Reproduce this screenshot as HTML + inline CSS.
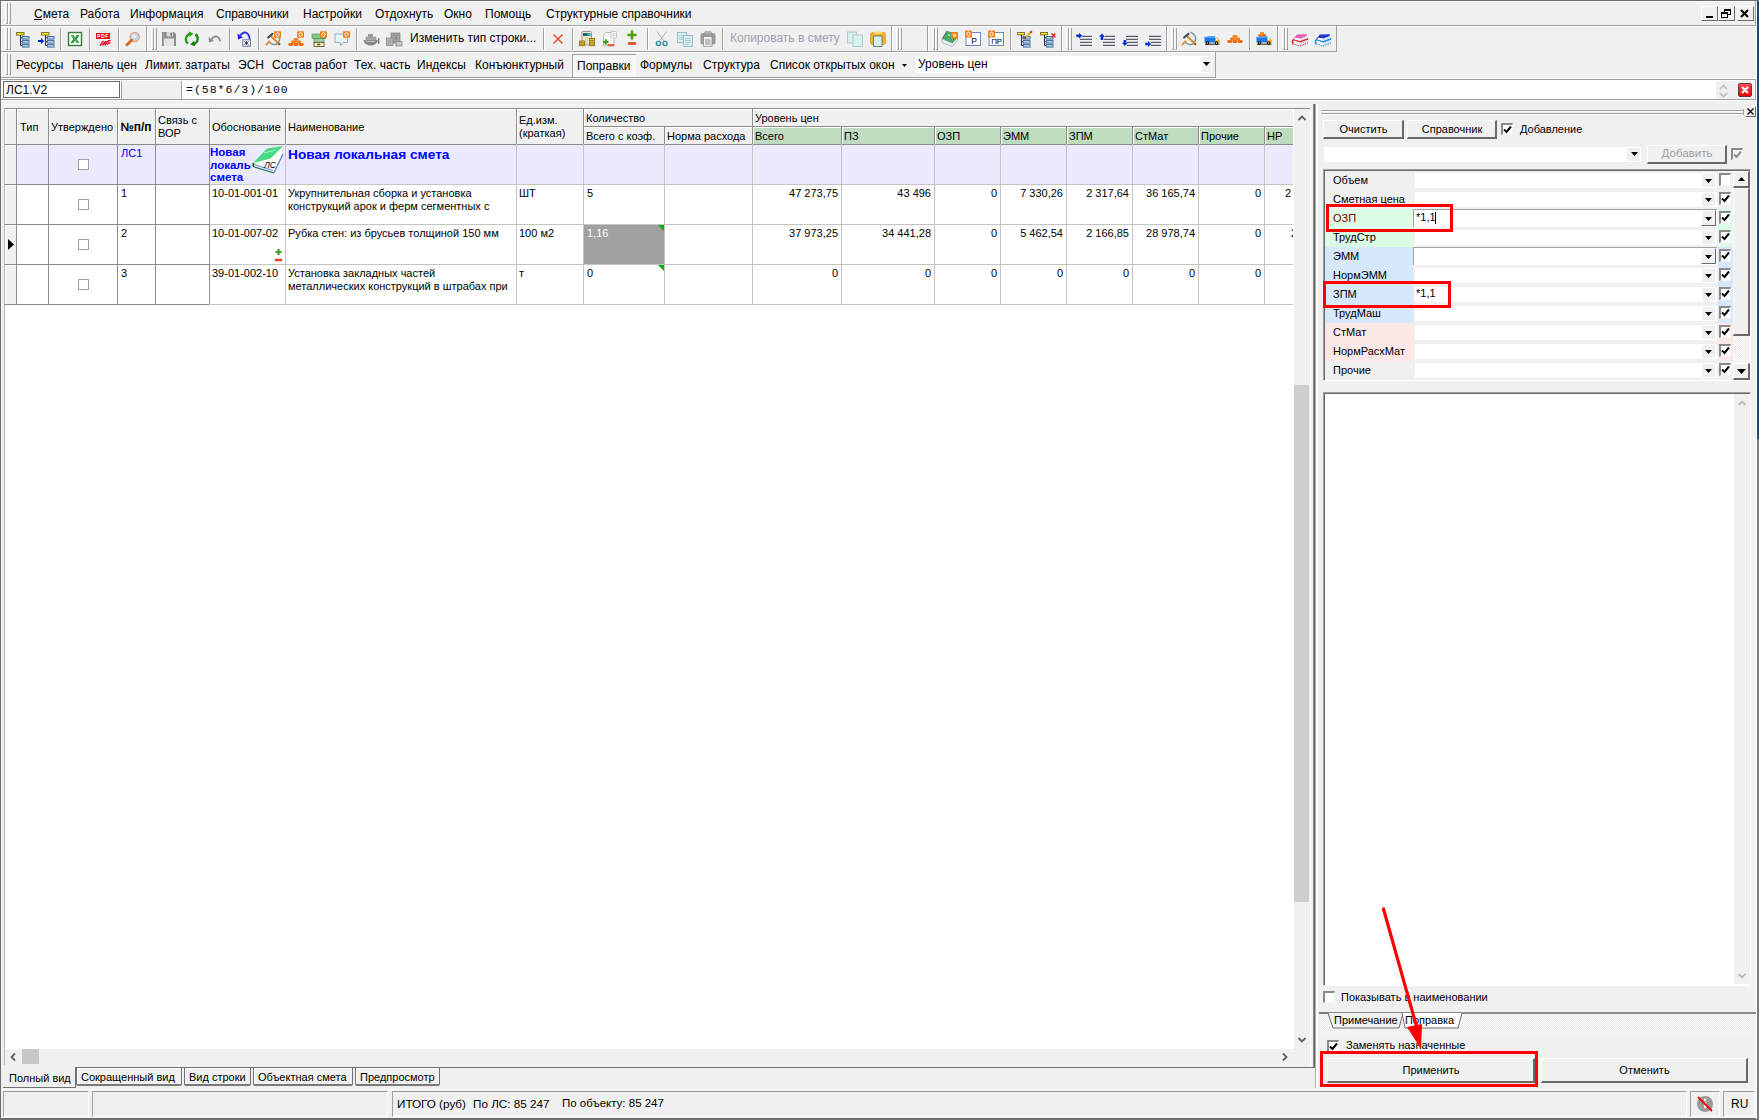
<!DOCTYPE html><html><head><meta charset="utf-8"><style>
html,body{margin:0;padding:0;width:1759px;height:1120px;overflow:hidden;background:#f0f0f0;position:relative;font-family:"Liberation Sans",sans-serif}
.a{position:absolute}
.tx{white-space:nowrap;font-family:"Liberation Sans",sans-serif}
svg{overflow:visible}
</style></head><body>
<div class="a" style="left:0px;top:0px;width:1759px;height:1px;background:#6d6d6d"></div>
<div class="a" style="left:0px;top:0px;width:1px;height:1120px;background:#6d6d6d"></div>
<div class="a" style="left:1757px;top:0px;width:2px;height:1120px;background:#7a7a7a"></div>
<div class="a" style="left:1757px;top:1px;width:2px;height:438px;background:#22476f"></div>
<div class="a" style="left:0px;top:1118px;width:1759px;height:2px;background:#707070"></div>
<div class="a" style="left:1px;top:1px;width:1755px;height:1px;background:#fff"></div>
<div class="a" style="left:1px;top:1px;width:1px;height:24px;background:#fff"></div>
<div class="a" style="left:1755px;top:1px;width:1px;height:25px;background:#a0a0a0"></div>
<div class="a" style="left:1756px;top:1px;width:1px;height:1118px;background:#fff"></div>
<div class="a" style="left:1px;top:25px;width:1755px;height:1px;background:#a0a0a0"></div>
<div class="a" style="left:1px;top:26px;width:1755px;height:1px;background:#fff"></div>
<div class="a" style="left:5px;top:3px;width:1px;height:21px;background:#fff"></div>
<div class="a" style="left:7px;top:3px;width:1px;height:21px;background:#a0a0a0"></div>
<div class="a" style="left:8px;top:3px;width:1px;height:21px;background:#fff"></div>
<div class="a" style="left:10px;top:3px;width:1px;height:21px;background:#a0a0a0"></div>
<div class="a" style="left:6px;top:23px;width:1px;height:1px;background:#a0a0a0"></div>
<div class="a" style="left:9px;top:23px;width:1px;height:1px;background:#a0a0a0"></div>
<div class="a tx" style="left:34px;top:7.84px;font-size:12px;line-height:12px;color:#000;">Смета</div>
<div class="a tx" style="left:80px;top:7.84px;font-size:12px;line-height:12px;color:#000;">Работа</div>
<div class="a tx" style="left:130px;top:7.84px;font-size:12px;line-height:12px;color:#000;">Информация</div>
<div class="a tx" style="left:216px;top:7.84px;font-size:12px;line-height:12px;color:#000;">Справочники</div>
<div class="a tx" style="left:303px;top:7.84px;font-size:12px;line-height:12px;color:#000;">Настройки</div>
<div class="a tx" style="left:375px;top:7.84px;font-size:12px;line-height:12px;color:#000;">Отдохнуть</div>
<div class="a tx" style="left:444px;top:7.84px;font-size:12px;line-height:12px;color:#000;">Окно</div>
<div class="a tx" style="left:485px;top:7.84px;font-size:12px;line-height:12px;color:#000;">Помощь</div>
<div class="a tx" style="left:546px;top:7.84px;font-size:12px;line-height:12px;color:#000;">Структурные справочники</div>
<div class="a" style="left:34px;top:19px;width:8px;height:1px;background:#000"></div>
<div class="a" style="left:1701px;top:6px;width:17px;height:15px;background:#f0f0f0;border-top:1px solid #fff;border-left:1px solid #fff;border-right:1px solid #696969;border-bottom:1px solid #696969;box-sizing:border-box"></div>
<div class="a" style="left:1718px;top:6px;width:17px;height:15px;background:#f0f0f0;border-top:1px solid #fff;border-left:1px solid #fff;border-right:1px solid #696969;border-bottom:1px solid #696969;box-sizing:border-box"></div>
<div class="a" style="left:1737px;top:6px;width:17px;height:15px;background:#f0f0f0;border-top:1px solid #fff;border-left:1px solid #fff;border-right:1px solid #696969;border-bottom:1px solid #696969;box-sizing:border-box"></div>
<div class="a" style="left:1706px;top:16px;width:7px;height:2px;background:#000"></div>
<svg class="a" style="left:1721px;top:9px" width="10" height="9" viewBox="0 0 10 9"><rect x="3.5" y="0.5" width="6" height="5" fill="none" stroke="#000"/><rect x="3" y="0" width="7" height="2" fill="#000"/><rect x="0.5" y="3.5" width="6" height="5" fill="#f0f0f0" stroke="#000"/><rect x="0" y="3" width="7" height="2" fill="#000"/></svg>
<svg class="a" style="left:1740px;top:9px" width="10" height="9" viewBox="0 0 10 9"><path d="M1 1 L8 8 M8 1 L1 8" stroke="#000" stroke-width="2"/></svg>
<div class="a" style="left:1px;top:26px;width:145px;height:1px;background:#fff"></div>
<div class="a" style="left:1px;top:26px;width:1px;height:25px;background:#fff"></div>
<div class="a" style="left:146px;top:26px;width:1px;height:26px;background:#a0a0a0"></div>
<div class="a" style="left:1px;top:51px;width:146px;height:1px;background:#a0a0a0"></div>
<div class="a" style="left:147px;top:26px;width:744px;height:1px;background:#fff"></div>
<div class="a" style="left:147px;top:26px;width:1px;height:25px;background:#fff"></div>
<div class="a" style="left:891px;top:26px;width:1px;height:26px;background:#a0a0a0"></div>
<div class="a" style="left:147px;top:51px;width:745px;height:1px;background:#a0a0a0"></div>
<div class="a" style="left:892px;top:26px;width:35px;height:1px;background:#fff"></div>
<div class="a" style="left:892px;top:26px;width:1px;height:25px;background:#fff"></div>
<div class="a" style="left:927px;top:26px;width:1px;height:26px;background:#a0a0a0"></div>
<div class="a" style="left:892px;top:51px;width:36px;height:1px;background:#a0a0a0"></div>
<div class="a" style="left:928px;top:26px;width:133px;height:1px;background:#fff"></div>
<div class="a" style="left:928px;top:26px;width:1px;height:25px;background:#fff"></div>
<div class="a" style="left:1061px;top:26px;width:1px;height:26px;background:#a0a0a0"></div>
<div class="a" style="left:928px;top:51px;width:134px;height:1px;background:#a0a0a0"></div>
<div class="a" style="left:1062px;top:26px;width:104px;height:1px;background:#fff"></div>
<div class="a" style="left:1062px;top:26px;width:1px;height:25px;background:#fff"></div>
<div class="a" style="left:1166px;top:26px;width:1px;height:26px;background:#a0a0a0"></div>
<div class="a" style="left:1062px;top:51px;width:105px;height:1px;background:#a0a0a0"></div>
<div class="a" style="left:1167px;top:26px;width:110px;height:1px;background:#fff"></div>
<div class="a" style="left:1167px;top:26px;width:1px;height:25px;background:#fff"></div>
<div class="a" style="left:1277px;top:26px;width:1px;height:26px;background:#a0a0a0"></div>
<div class="a" style="left:1167px;top:51px;width:111px;height:1px;background:#a0a0a0"></div>
<div class="a" style="left:1278px;top:26px;width:58px;height:1px;background:#fff"></div>
<div class="a" style="left:1278px;top:26px;width:1px;height:25px;background:#fff"></div>
<div class="a" style="left:1336px;top:26px;width:1px;height:26px;background:#a0a0a0"></div>
<div class="a" style="left:1278px;top:51px;width:59px;height:1px;background:#a0a0a0"></div>
<div class="a" style="left:5px;top:28px;width:1px;height:22px;background:#fff"></div>
<div class="a" style="left:7px;top:28px;width:1px;height:22px;background:#a0a0a0"></div>
<div class="a" style="left:8px;top:28px;width:1px;height:22px;background:#fff"></div>
<div class="a" style="left:10px;top:28px;width:1px;height:22px;background:#a0a0a0"></div>
<div class="a" style="left:6px;top:49px;width:1px;height:1px;background:#a0a0a0"></div>
<div class="a" style="left:9px;top:49px;width:1px;height:1px;background:#a0a0a0"></div>
<div class="a" style="left:151px;top:28px;width:1px;height:22px;background:#fff"></div>
<div class="a" style="left:153px;top:28px;width:1px;height:22px;background:#a0a0a0"></div>
<div class="a" style="left:154px;top:28px;width:1px;height:22px;background:#fff"></div>
<div class="a" style="left:156px;top:28px;width:1px;height:22px;background:#a0a0a0"></div>
<div class="a" style="left:152px;top:49px;width:1px;height:1px;background:#a0a0a0"></div>
<div class="a" style="left:155px;top:49px;width:1px;height:1px;background:#a0a0a0"></div>
<div class="a" style="left:896px;top:28px;width:1px;height:22px;background:#fff"></div>
<div class="a" style="left:898px;top:28px;width:1px;height:22px;background:#a0a0a0"></div>
<div class="a" style="left:899px;top:28px;width:1px;height:22px;background:#fff"></div>
<div class="a" style="left:901px;top:28px;width:1px;height:22px;background:#a0a0a0"></div>
<div class="a" style="left:897px;top:49px;width:1px;height:1px;background:#a0a0a0"></div>
<div class="a" style="left:900px;top:49px;width:1px;height:1px;background:#a0a0a0"></div>
<div class="a" style="left:932px;top:28px;width:1px;height:22px;background:#fff"></div>
<div class="a" style="left:934px;top:28px;width:1px;height:22px;background:#a0a0a0"></div>
<div class="a" style="left:935px;top:28px;width:1px;height:22px;background:#fff"></div>
<div class="a" style="left:937px;top:28px;width:1px;height:22px;background:#a0a0a0"></div>
<div class="a" style="left:933px;top:49px;width:1px;height:1px;background:#a0a0a0"></div>
<div class="a" style="left:936px;top:49px;width:1px;height:1px;background:#a0a0a0"></div>
<div class="a" style="left:1066px;top:28px;width:1px;height:22px;background:#fff"></div>
<div class="a" style="left:1068px;top:28px;width:1px;height:22px;background:#a0a0a0"></div>
<div class="a" style="left:1069px;top:28px;width:1px;height:22px;background:#fff"></div>
<div class="a" style="left:1071px;top:28px;width:1px;height:22px;background:#a0a0a0"></div>
<div class="a" style="left:1067px;top:49px;width:1px;height:1px;background:#a0a0a0"></div>
<div class="a" style="left:1070px;top:49px;width:1px;height:1px;background:#a0a0a0"></div>
<div class="a" style="left:1171px;top:28px;width:1px;height:22px;background:#fff"></div>
<div class="a" style="left:1173px;top:28px;width:1px;height:22px;background:#a0a0a0"></div>
<div class="a" style="left:1174px;top:28px;width:1px;height:22px;background:#fff"></div>
<div class="a" style="left:1176px;top:28px;width:1px;height:22px;background:#a0a0a0"></div>
<div class="a" style="left:1172px;top:49px;width:1px;height:1px;background:#a0a0a0"></div>
<div class="a" style="left:1175px;top:49px;width:1px;height:1px;background:#a0a0a0"></div>
<div class="a" style="left:1282px;top:28px;width:1px;height:22px;background:#fff"></div>
<div class="a" style="left:1284px;top:28px;width:1px;height:22px;background:#a0a0a0"></div>
<div class="a" style="left:1285px;top:28px;width:1px;height:22px;background:#fff"></div>
<div class="a" style="left:1287px;top:28px;width:1px;height:22px;background:#a0a0a0"></div>
<div class="a" style="left:1283px;top:49px;width:1px;height:1px;background:#a0a0a0"></div>
<div class="a" style="left:1286px;top:49px;width:1px;height:1px;background:#a0a0a0"></div>
<div class="a" style="left:60px;top:28px;width:1px;height:22px;background:#a0a0a0"></div>
<div class="a" style="left:61px;top:28px;width:1px;height:22px;background:#fff"></div>
<div class="a" style="left:89px;top:28px;width:1px;height:22px;background:#a0a0a0"></div>
<div class="a" style="left:90px;top:28px;width:1px;height:22px;background:#fff"></div>
<div class="a" style="left:118px;top:28px;width:1px;height:22px;background:#a0a0a0"></div>
<div class="a" style="left:119px;top:28px;width:1px;height:22px;background:#fff"></div>
<div class="a" style="left:229px;top:28px;width:1px;height:22px;background:#a0a0a0"></div>
<div class="a" style="left:230px;top:28px;width:1px;height:22px;background:#fff"></div>
<div class="a" style="left:258px;top:28px;width:1px;height:22px;background:#a0a0a0"></div>
<div class="a" style="left:259px;top:28px;width:1px;height:22px;background:#fff"></div>
<div class="a" style="left:356px;top:28px;width:1px;height:22px;background:#a0a0a0"></div>
<div class="a" style="left:357px;top:28px;width:1px;height:22px;background:#fff"></div>
<div class="a" style="left:543px;top:28px;width:1px;height:22px;background:#a0a0a0"></div>
<div class="a" style="left:544px;top:28px;width:1px;height:22px;background:#fff"></div>
<div class="a" style="left:572px;top:28px;width:1px;height:22px;background:#a0a0a0"></div>
<div class="a" style="left:573px;top:28px;width:1px;height:22px;background:#fff"></div>
<div class="a" style="left:647px;top:28px;width:1px;height:22px;background:#a0a0a0"></div>
<div class="a" style="left:648px;top:28px;width:1px;height:22px;background:#fff"></div>
<div class="a" style="left:722px;top:28px;width:1px;height:22px;background:#a0a0a0"></div>
<div class="a" style="left:723px;top:28px;width:1px;height:22px;background:#fff"></div>
<div class="a" style="left:1010px;top:28px;width:1px;height:22px;background:#a0a0a0"></div>
<div class="a" style="left:1011px;top:28px;width:1px;height:22px;background:#fff"></div>
<div class="a" style="left:1249px;top:28px;width:1px;height:22px;background:#a0a0a0"></div>
<div class="a" style="left:1250px;top:28px;width:1px;height:22px;background:#fff"></div>
<svg class="a" style="left:14px;top:31px" width="16" height="16" viewBox="0 0 16 16"><rect x="2.5" y="1.5" width="7.5" height="2.6" fill="#f8f000" stroke="#807840" stroke-width="1"/><path d="M6.5 4 V14.5 M6.5 6.8 H8.5 M6.5 10.8 H8.5 M6.5 14.5 H8.5" stroke="#24345e" stroke-width="1.1" fill="none"/><rect x="8.5" y="5.5" width="6.5" height="2.6" fill="#a8d0f8" stroke="#56709a" stroke-width="1"/><rect x="8.5" y="9.5" width="6.5" height="2.6" fill="#a8d0f8" stroke="#56709a" stroke-width="1"/><rect x="8.5" y="13.5" width="6.5" height="2.6" fill="#a8d0f8" stroke="#56709a" stroke-width="1"/></svg>
<svg class="a" style="left:38px;top:31px" width="16" height="16" viewBox="0 0 16 16"><rect x="3.5" y="1.5" width="7.5" height="2.6" fill="#f8f000" stroke="#807840" stroke-width="1"/><path d="M7.5 4 V14.5 M7.5 6.8 H9.5 M7.5 10.8 H9.5 M7.5 14.5 H9.5" stroke="#24345e" stroke-width="1.1" fill="none"/><rect x="9.5" y="5.5" width="6.5" height="2.6" fill="#a8d0f8" stroke="#56709a" stroke-width="1"/><rect x="9.5" y="9.5" width="6.5" height="2.6" fill="#a8d0f8" stroke="#56709a" stroke-width="1"/><rect x="9.5" y="13.5" width="6.5" height="2.6" fill="#a8d0f8" stroke="#56709a" stroke-width="1"/><path d="M0 9 H3 V7 L6.2 10 L3 13 V11 H0 Z" fill="#0028e0"/></svg>
<svg class="a" style="left:67px;top:31px" width="16" height="16" viewBox="0 0 16 16"><rect x="1.5" y="1.5" width="13" height="13" fill="#fafffa" stroke="#3c7a3c" stroke-width="1.4"/><path d="M3.5 4 H6.5 L8 6.5 L9.5 4 H12.5 L9.8 8 L12.5 12 H9.5 L8 9.5 L6.5 12 H3.5 L6.2 8 Z" fill="#2e9a3a"/><path d="M4.5 4.5 L11 11.5" stroke="#9ad8a0" stroke-width="0.6"/></svg>
<svg class="a" style="left:96px;top:31px" width="16" height="16" viewBox="0 0 16 16"><path d="M3.5 1 H13 L15.5 3.5 V15.5 H3.5 Z" fill="#fff" stroke="#c8d8d8" stroke-width="0.6"/><rect x="0" y="2" width="14" height="6" fill="#e8001a"/><text x="7" y="7.2" font-size="5.2" font-family="Liberation Sans" font-weight="bold" fill="#fff" text-anchor="middle" letter-spacing="0.6">PDF</text><path d="M4 14.5 L7.5 10 M6.5 14.5 L10 10 M9 14.5 C10 11 12 9.5 14.5 9.5 M11.5 14 C11.5 12 13 11.5 14.5 12" stroke="#e8001a" stroke-width="1.4" fill="none"/></svg>
<svg class="a" style="left:125px;top:31px" width="16" height="16" viewBox="0 0 16 16"><circle cx="9.7" cy="6" r="4.6" fill="#c0d4f8" stroke="#e8a070" stroke-width="1.3"/><circle cx="9" cy="5.2" r="2" fill="#e8f0ff"/><path d="M6.5 9.3 L2 13.8" stroke="#d86818" stroke-width="3" stroke-linecap="round"/></svg>
<svg class="a" style="left:161px;top:31px" width="16" height="16" viewBox="0 0 16 16"><path d="M1 1 H13 L15 3 V15 H1 Z" fill="#8c8c8c"/><rect x="3" y="7.5" width="10" height="7.5" fill="#e4e4e4"/><rect x="5.5" y="1" width="6.5" height="4.5" fill="#d8d8d8"/><rect x="9.5" y="1.8" width="1.6" height="3" fill="#707070"/><path d="M2.5 2 V14" stroke="#a8a8a8" stroke-width="0.8"/></svg>
<svg class="a" style="left:184px;top:31px" width="16" height="16" viewBox="0 0 16 16"><path d="M4 12.5 A5.6 5.6 0 0 1 5.8 2.8" stroke="#28a020" stroke-width="2.4" fill="none"/><path d="M4.8 0.5 L9.5 2.5 L5.5 6 Z" fill="#28a020"/><path d="M11.5 3.2 A5.6 5.6 0 0 1 9.8 13" stroke="#1a8a18" stroke-width="2.4" fill="none"/><path d="M11 15.3 L6.2 13.5 L10.2 9.8 Z" fill="#0a7a0a"/></svg>
<svg class="a" style="left:207px;top:31px" width="16" height="16" viewBox="0 0 16 16"><path d="M4.5 8.5 C7 4 11.5 4 13.5 10.5" stroke="#8c8c8c" stroke-width="1.6" fill="none"/><path d="M1.5 6 L2 11.5 L7 10 Z" fill="#8c8c8c"/></svg>
<svg class="a" style="left:236px;top:31px" width="16" height="16" viewBox="0 0 16 16"><path d="M4.5 4.5 C7 0 13 0 13.8 8.5" stroke="#3030e8" stroke-width="1.8" fill="none"/><path d="M1.5 2.5 L2 8.5 L7 6.5 Z" fill="#2020e8"/><rect x="6.8" y="8.8" width="7.6" height="6.4" fill="#fff" stroke="#6070a8" stroke-width="1"/><path d="M8.5 10.5 L12.5 13.5 M12.5 10.5 L8.5 13.5 M10.5 10.2 V13.8" stroke="#202020" stroke-width="0.9"/></svg>
<svg class="a" style="left:265px;top:31px" width="16" height="16" viewBox="0 0 16 16"><path d="M9.4 1.3 C14 2.5 15.5 7 14.2 10 C13 13 10.5 13.8 8.5 13.4 C6.8 13 5.5 12.3 4.4 11.2" stroke="#7a9aa0" stroke-width="1.5" fill="none"/><path d="M6.1 5.2 L14.6 13.4" stroke="#e08a28" stroke-width="2"/><path d="M13.5 12.4 L15 13.8" stroke="#905010" stroke-width="2"/><path d="M3.1 6.5 L7.4 2.9" stroke="#3a5058" stroke-width="2.2" stroke-linecap="round"/><path d="M1.3 13.6 L4.6 10.3" stroke="#e08a28" stroke-width="1.9" stroke-linecap="round"/><rect x="9" y="0.3" width="7" height="6.4" rx="0.8" fill="#f08018"/><circle cx="12.5" cy="3.5" r="1.7" fill="none" stroke="#fff" stroke-width="0.9"/><path d="M12.5 1 V1.6 M12.5 5.4 V6 M10 3.5 H10.6 M14.4 3.5 H15" stroke="#fff" stroke-width="0.8"/></svg>
<svg class="a" style="left:288px;top:31px" width="16" height="16" viewBox="0 0 16 16"><rect x="0.3" y="12" width="5" height="3" rx="1.4" fill="#f06a10"/><rect x="5.5" y="12" width="5" height="3" rx="1.4" fill="#f06a10"/><rect x="10.7" y="12" width="5" height="3" rx="1.4" fill="#f06a10"/><rect x="3" y="9.5" width="5" height="3" rx="1.4" fill="#f07a18"/><rect x="8.2" y="9.5" width="5" height="3" rx="1.4" fill="#f07a18"/><rect x="5.5" y="7" width="5" height="3" rx="1.4" fill="#f08a20"/><rect x="9" y="0.3" width="7" height="6.4" rx="0.8" fill="#f08018"/><circle cx="12.5" cy="3.5" r="1.7" fill="none" stroke="#fff" stroke-width="0.9"/><path d="M12.5 1 V1.6 M12.5 5.4 V6 M10 3.5 H10.6 M14.4 3.5 H15" stroke="#fff" stroke-width="0.8"/></svg>
<svg class="a" style="left:311px;top:31px" width="16" height="16" viewBox="0 0 16 16"><rect x="1" y="3" width="14" height="4.5" fill="#88c488" stroke="#4a8a4a" stroke-width="0.6"/><rect x="3" y="7.5" width="10" height="4" fill="#98cc98" stroke="#4a8a4a" stroke-width="0.6"/><rect x="3" y="11.5" width="10" height="4" fill="#fff4c8" stroke="#6a5030" stroke-width="0.9"/><rect x="6" y="12.8" width="3.5" height="1.4" rx="0.7" fill="#206a20"/><rect x="9" y="0.3" width="7" height="6.4" rx="0.8" fill="#f08018"/><circle cx="12.5" cy="3.5" r="1.7" fill="none" stroke="#fff" stroke-width="0.9"/><path d="M12.5 1 V1.6 M12.5 5.4 V6 M10 3.5 H10.6 M14.4 3.5 H15" stroke="#fff" stroke-width="0.8"/></svg>
<svg class="a" style="left:334px;top:31px" width="16" height="16" viewBox="0 0 16 16"><path d="M1 3 H13.5 V11.5 H9 L6.8 14.8 L6.2 11.5 H1 Z" fill="#e4f6fc" stroke="#98a4a8" stroke-width="0.9"/><rect x="9" y="0.3" width="7" height="6.4" rx="0.8" fill="#f08018"/><circle cx="12.5" cy="3.5" r="1.7" fill="none" stroke="#fff" stroke-width="0.9"/><path d="M12.5 1 V1.6 M12.5 5.4 V6 M10 3.5 H10.6 M14.4 3.5 H15" stroke="#fff" stroke-width="0.8"/></svg>
<svg class="a" style="left:363px;top:31px" width="16" height="16" viewBox="0 0 16 16"><path d="M0.5 9 C1 13 4 14.5 8 14.5 C12 14.5 14.5 12 15 9 Z" fill="#8a8a8a"/><rect x="3" y="6" width="10" height="3.5" fill="#a8a8a8" stroke="#808080" stroke-width="0.5"/><rect x="5" y="3" width="5" height="3" fill="#9a9a9a"/><path d="M3 10.5 H12" stroke="#d0d0d0" stroke-width="0.8"/><path d="M15.8 7 V13" stroke="#404040" stroke-width="0.9"/></svg>
<svg class="a" style="left:386px;top:31px" width="16" height="16" viewBox="0 0 16 16"><rect x="5" y="2" width="9" height="10" fill="#a4a4a4" stroke="#7a7a7a" stroke-width="0.7"/><path d="M7 4 H9 M10.5 4 H12 M9.5 6 L11 8.5 M11 6 L9.5 8.5" stroke="#686868" stroke-width="0.6"/><rect x="0.5" y="7" width="6.5" height="7.5" fill="#b8b8b8" stroke="#7a7a7a" stroke-width="0.7"/><path d="M2.5 8.5 V13.5 M4.5 8.5 V13.5" stroke="#888" stroke-width="0.6"/><rect x="10" y="10.5" width="6" height="4.5" fill="#c8c8c8" stroke="#7a7a7a" stroke-width="0.7"/></svg>
<svg class="a" style="left:550px;top:31px" width="16" height="16" viewBox="0 0 16 16"><path d="M3.5 3.5 L12.5 12.5 M12.5 3.5 L3.5 12.5" stroke="#f04830" stroke-width="1.5"/></svg>
<svg class="a" style="left:579px;top:31px" width="16" height="16" viewBox="0 0 16 16"><rect x="3" y="0.5" width="9.5" height="13.5" rx="1" fill="#f4ead4" stroke="#a07868" stroke-width="0.8"/><rect x="4" y="2" width="7.5" height="3" fill="#1a6a70"/><rect x="8.5" y="2.6" width="2.6" height="1.8" fill="#40d0e0"/><path d="M4.5 7 H11 M4.5 9.5 H11 M4.5 12 H11 M6.3 6 V13 M8.3 6 V13" stroke="#d8c8a0" stroke-width="0.7"/><rect x="0.3" y="10" width="5.2" height="4.8" fill="#e8c030" stroke="#806010" stroke-width="0.7"/><path d="M0.5 11.6 H5.3 M0.5 13.2 H5.3" stroke="#806010" stroke-width="0.6"/><rect x="10.5" y="7.5" width="5.2" height="7.3" fill="#e8c030" stroke="#806010" stroke-width="0.7"/><path d="M10.7 9.5 H15.5 M10.7 11.3 H15.5 M10.7 13.1 H15.5" stroke="#806010" stroke-width="0.6"/></svg>
<svg class="a" style="left:602px;top:31px" width="16" height="16" viewBox="0 0 16 16"><path d="M4 1.5 H12 V15 H1.5 V4.5 Z" fill="#fafafa" stroke="#a8a8a8" stroke-width="0.8"/><rect x="9" y="0.5" width="5.5" height="6.5" rx="0.6" fill="#fff" stroke="#b0b0b0" stroke-width="0.7"/><path d="M10.5 2.5 H12.5 M10.5 4.5 H12.5" stroke="#8090f0" stroke-width="0.7"/><path d="M1 11 H6.5 M3.8 8.2 V13.8" stroke="#38a018" stroke-width="2"/><path d="M5.5 14 H12" stroke="#e83a18" stroke-width="1.6"/></svg>
<svg class="a" style="left:625px;top:31px" width="16" height="16" viewBox="0 0 16 16"><path d="M3.5 4 H10.5 M7 0.5 V7.5" stroke="#50a010" stroke-width="2.6" stroke-linecap="round"/><path d="M4 12.5 H10" stroke="#e84018" stroke-width="2.6" stroke-linecap="round"/></svg>
<svg class="a" style="left:654px;top:31px" width="16" height="16" viewBox="0 0 16 16"><path d="M3 0.5 L10 10 M12.5 0.5 L5.5 10" stroke="#b0b0b0" stroke-width="1"/><circle cx="4.5" cy="12.5" r="2.1" fill="none" stroke="#2a90a0" stroke-width="1.4"/><circle cx="11" cy="12.5" r="2.1" fill="none" stroke="#2a90a0" stroke-width="1.4"/></svg>
<svg class="a" style="left:677px;top:31px" width="16" height="16" viewBox="0 0 16 16"><rect x="0.5" y="1.5" width="9" height="10" fill="#daf0f4" stroke="#90b8c0" stroke-width="0.9"/><path d="M2 4.5 H6 M2 6.5 H8 M2 8.5 H8" stroke="#90b8c0" stroke-width="0.7"/><rect x="6.5" y="4.5" width="9" height="11" fill="#daf0f4" stroke="#90b8c0" stroke-width="0.9"/><path d="M8 7.5 H14 M8 9.5 H14 M8 11.5 H14 M8 13.5 H12" stroke="#90b8c0" stroke-width="0.7"/></svg>
<svg class="a" style="left:700px;top:31px" width="16" height="16" viewBox="0 0 16 16"><rect x="0.5" y="2" width="15" height="11.5" rx="2" fill="#9a9a9a"/><rect x="4.5" y="0.5" width="7" height="2.5" rx="1" fill="#b4b4b4" stroke="#888" stroke-width="0.5"/><rect x="3.5" y="5.5" width="8.5" height="10" fill="#f0f0f0" stroke="#888" stroke-width="0.7"/><path d="M5 9 H10.5 M5 11 H10.5 M5 13 H10.5" stroke="#666" stroke-width="0.7"/></svg>
<svg class="a" style="left:847px;top:31px" width="16" height="16" viewBox="0 0 16 16"><rect x="0.5" y="1" width="9" height="11" fill="#dcf0f0" stroke="#a0c8c8" stroke-width="0.9"/><rect x="6" y="4" width="9.5" height="11.5" fill="#dcf0f0" stroke="#a0c8c8" stroke-width="0.9"/></svg>
<svg class="a" style="left:870px;top:31px" width="16" height="16" viewBox="0 0 16 16"><rect x="0.5" y="1.5" width="15" height="12" rx="2" fill="#f4b020" stroke="#d09010" stroke-width="0.6"/><rect x="4" y="0.5" width="8" height="2.5" rx="1" fill="#f8d878"/><rect x="3.5" y="5" width="8.5" height="10.5" fill="#d8eef2" stroke="#607880" stroke-width="0.9"/></svg>
<svg class="a" style="left:942px;top:31px" width="16" height="16" viewBox="0 0 16 16"><path d="M0 8 V11.5 L10.5 15.5 L15.5 9 V6.5 L10.5 12.2 Z" fill="#f4f4f8" stroke="#a0a8b8" stroke-width="0.8"/><path d="M5 0 L0.3 7.7 L10.5 12.2 L15.5 6.5 L14 2 Z" fill="#48a870"/><path d="M5 0 L0.3 7.7" stroke="#2a8050" stroke-width="1"/><path d="M6 3.5 L8 4.5" stroke="#d0f8e0" stroke-width="1.2"/><rect x="9" y="1" width="7" height="6.7" rx="1" fill="#f08010"/><path d="M12.5 2.2 L14.5 4.3 L12.5 6.4 L10.5 4.3 Z" fill="#fff"/><circle cx="12.5" cy="4.3" r="0.7" fill="#f08010"/></svg>
<svg class="a" style="left:965px;top:31px" width="16" height="16" viewBox="0 0 16 16"><rect x="1" y="1.5" width="14.5" height="13" fill="#fff" stroke="#7088b8" stroke-width="1"/><text x="9" y="12.8" font-size="8.5" font-family="Liberation Sans" fill="#000" text-anchor="middle">P</text><rect x="0" y="-0.5" width="7" height="7" rx="0.8" fill="#f08018"/><circle cx="3.5" cy="3" r="1.7" fill="none" stroke="#fff" stroke-width="0.9"/><path d="M3.5 0.5 V1 M3.5 5 V5.5 M1 3 H1.5 M5.5 3 H6" stroke="#fff" stroke-width="0.8"/></svg>
<svg class="a" style="left:988px;top:31px" width="16" height="16" viewBox="0 0 16 16"><rect x="1" y="1.5" width="14.5" height="13" fill="#fff" stroke="#7088b8" stroke-width="1"/><text x="8.6" y="12.8" font-size="8" font-family="Liberation Sans" fill="#000" text-anchor="middle" letter-spacing="-0.3">ПР</text><rect x="0" y="-0.5" width="7" height="7" rx="0.8" fill="#f08018"/><circle cx="3.5" cy="3" r="1.7" fill="none" stroke="#fff" stroke-width="0.9"/><path d="M3.5 0.5 V1 M3.5 5 V5.5 M1 3 H1.5 M5.5 3 H6" stroke="#fff" stroke-width="0.8"/></svg>
<svg class="a" style="left:1017px;top:31px" width="16" height="16" viewBox="0 0 16 16"><rect x="0.5" y="1.5" width="7" height="2.4" fill="#f8f000" stroke="#807840" stroke-width="1"/><path d="M4.5 4 V14.5 M4.5 6.8 H6.5 M4.5 10.8 H6.5 M4.5 14.5 H6.5" stroke="#24345e" stroke-width="1.1" fill="none"/><rect x="6.5" y="5.5" width="6.5" height="2.6" fill="#a8d0f8" stroke="#56709a" stroke-width="1"/><rect x="6.5" y="9.5" width="6.5" height="2.6" fill="#a8d0f8" stroke="#56709a" stroke-width="1"/><rect x="6.5" y="13.5" width="6.5" height="2.6" fill="#a8d0f8" stroke="#56709a" stroke-width="1"/><path d="M8.5 6.5 L14 1" stroke="#e8b020" stroke-width="2.2"/><path d="M13.2 1.8 L14.8 0.2" stroke="#e03030" stroke-width="2.2"/><path d="M7.5 7.5 L8.8 6.2" stroke="#202020" stroke-width="1.5"/></svg>
<svg class="a" style="left:1040px;top:31px" width="16" height="16" viewBox="0 0 16 16"><rect x="0.5" y="1.5" width="7" height="2.4" fill="#f8f000" stroke="#807840" stroke-width="1"/><path d="M4.5 4 V14.5 M4.5 6.8 H6.5 M4.5 10.8 H6.5 M4.5 14.5 H6.5" stroke="#24345e" stroke-width="1.1" fill="none"/><rect x="6.5" y="5.5" width="6.5" height="2.6" fill="#a8d0f8" stroke="#56709a" stroke-width="1"/><rect x="6.5" y="9.5" width="6.5" height="2.6" fill="#a8d0f8" stroke="#56709a" stroke-width="1"/><rect x="6.5" y="13.5" width="6.5" height="2.6" fill="#a8d0f8" stroke="#56709a" stroke-width="1"/><path d="M11.5 2.5 L15.5 6.5 M15.5 2.5 L11.5 6.5" stroke="#e82020" stroke-width="1.3"/></svg>
<svg class="a" style="left:1076px;top:31px" width="16" height="16" viewBox="0 0 16 16"><path d="M6 5.4 H16 M4 8.4 H16 M4 11.4 H16 M4 14.4 H16" stroke="#5a6070" stroke-width="1.3"/><path d="M0.3 4.8 H4" stroke="#0830d8" stroke-width="2.6"/><path d="M3 1.8 L6.3 4.8 L3 7.8 Z" fill="#0830d8"/></svg>
<svg class="a" style="left:1099px;top:31px" width="16" height="16" viewBox="0 0 16 16"><path d="M6 5.4 H16 M5 8.4 H16 M4 11.4 H16 M4 14.4 H16" stroke="#5a6070" stroke-width="1.3"/><path d="M3 9 V5" stroke="#0830d8" stroke-width="2.6"/><path d="M0 5.8 L3 2.5 L6 5.8 Z" fill="#0830d8"/></svg>
<svg class="a" style="left:1122px;top:31px" width="16" height="16" viewBox="0 0 16 16"><path d="M4 5.4 H16 M4 8.4 H16 M5 11.4 H16 M5 14.4 H16" stroke="#5a6070" stroke-width="1.3"/><path d="M2.9 9 V12.5" stroke="#0830d8" stroke-width="2.6"/><path d="M-0.1 11.8 L2.9 15 L5.9 11.8 Z" fill="#0830d8"/></svg>
<svg class="a" style="left:1145px;top:31px" width="16" height="16" viewBox="0 0 16 16"><path d="M4 5.4 H16 M4 8.4 H16 M6 11.4 H16 M6 14.4 H16" stroke="#5a6070" stroke-width="1.3"/><path d="M0.3 13 H4" stroke="#0830d8" stroke-width="2.6"/><path d="M3 10 L6.3 13 L3 16 Z" fill="#0830d8"/></svg>
<svg class="a" style="left:1181px;top:31px" width="16" height="16" viewBox="0 0 16 16"><path d="M9.4 1.3 C14 2.5 15.5 7 14.2 10 C13 13 10.5 13.8 8.5 13.4 C6.8 13 5.5 12.3 4.4 11.2" stroke="#7a9aa0" stroke-width="1.5" fill="none"/><path d="M6.1 5.2 L14.6 13.4" stroke="#e08a28" stroke-width="2"/><path d="M13.5 12.4 L15 13.8" stroke="#905010" stroke-width="2"/><path d="M3.1 6.5 L7.4 2.9" stroke="#3a5058" stroke-width="2.2" stroke-linecap="round"/><path d="M1.3 13.6 L4.6 10.3" stroke="#e08a28" stroke-width="1.9" stroke-linecap="round"/></svg>
<svg class="a" style="left:1204px;top:31px" width="16" height="16" viewBox="0 0 16 16"><path d="M0.5 6 L11 5 V11.5 H0.5 Z" fill="#1a7ae8"/><path d="M0.5 6 L11 5 V7 H0.5 Z" fill="#4aa0f8"/><path d="M11 6.5 H13.5 L15.8 9.5 V12 H11 Z" fill="#f0a020"/><rect x="12" y="7.3" width="1.8" height="2" fill="#fff"/><rect x="1" y="12.5" width="14.5" height="1.6" fill="#2a2a2a" opacity="0.7"/><circle cx="3.5" cy="12" r="1.8" fill="#101010"/><circle cx="3.5" cy="12" r="0.7" fill="#f0e000"/><circle cx="12.5" cy="12" r="1.8" fill="#101010"/><circle cx="12.5" cy="12" r="0.7" fill="#f0e000"/></svg>
<svg class="a" style="left:1227px;top:31px" width="16" height="16" viewBox="0 0 16 16"><rect x="0.3" y="9" width="5" height="3" rx="1.4" fill="#f06a10"/><rect x="5.5" y="9" width="5" height="3" rx="1.4" fill="#f06a10"/><rect x="10.7" y="9" width="5" height="3" rx="1.4" fill="#f06a10"/><rect x="3" y="6.5" width="5" height="3" rx="1.4" fill="#f07a18"/><rect x="8.2" y="6.5" width="5" height="3" rx="1.4" fill="#f07a18"/><rect x="5.5" y="4" width="5" height="3" rx="1.4" fill="#f08a20"/></svg>
<svg class="a" style="left:1256px;top:31px" width="16" height="16" viewBox="0 0 16 16"><path d="M0.5 6 L11 5 V11.5 H0.5 Z" fill="#1a7ae8"/><path d="M0.5 6 L11 5 V7 H0.5 Z" fill="#4aa0f8"/><path d="M11 6.5 H13.5 L15.8 9.5 V12 H11 Z" fill="#f0a020"/><rect x="12" y="7.3" width="1.8" height="2" fill="#fff"/><rect x="1" y="12.5" width="14.5" height="1.6" fill="#2a2a2a" opacity="0.7"/><circle cx="3.5" cy="12" r="1.8" fill="#101010"/><circle cx="3.5" cy="12" r="0.7" fill="#f0e000"/><circle cx="12.5" cy="12" r="1.8" fill="#101010"/><circle cx="12.5" cy="12" r="0.7" fill="#f0e000"/><rect x="2" y="3.2" width="4" height="2.4" rx="1.1" fill="#f06a10"/><rect x="6" y="3" width="4" height="2.4" rx="1.1" fill="#f06a10"/><rect x="4" y="1" width="4" height="2.4" rx="1.1" fill="#f08a20"/></svg>
<svg class="a" style="left:1292px;top:31px" width="16" height="16" viewBox="0 0 16 16"><path d="M0.8 9 L8 11 L16 8.5 V12 L8 14.5 L0.8 12.5 Z" fill="#fff"/><path d="M8 11 L16 8.5 V12 L8 14.5 Z" fill="#d0e0ec"/><path d="M0.8 12.8 L8 15 L16 12" stroke="#e82a30" stroke-width="1" stroke-dasharray="1.5 1" fill="none"/><path d="M1.2 13 C0.3 11.5 0.3 9.5 1.5 8.6 L8 10.8 L16.2 7.8" stroke="#e82a30" stroke-width="1.5" fill="none"/><path d="M2.2 6.5 L5 3.6 L15 3.3 L14.5 5.2 L8 7.8 Z" fill="#e860b0"/><path d="M2.2 6.5 L8 7.8 V9.8 L2.2 8.5 Z" fill="#fff"/><path d="M8 7.8 L15 5.2 V7.2 L8 9.8 Z" fill="#d8e4f0"/><path d="M2.2 6.5 V8.5" stroke="#e860b0" stroke-width="1"/></svg>
<svg class="a" style="left:1315px;top:31px" width="16" height="16" viewBox="0 0 16 16"><path d="M0.8 9 L8 11 L16 8.5 V12 L8 14.5 L0.8 12.5 Z" fill="#fff"/><path d="M8 11 L16 8.5 V12 L8 14.5 Z" fill="#d0e0ec"/><path d="M0.8 12.8 L8 15 L16 12" stroke="#1890e0" stroke-width="1" stroke-dasharray="1.5 1" fill="none"/><path d="M1.2 13 C0.3 11.5 0.3 9.5 1.5 8.6 L8 10.8 L16.2 7.8" stroke="#1890e0" stroke-width="1.5" fill="none"/><path d="M2.2 6.5 L5 3.6 L15 3.3 L14.5 5.2 L8 7.8 Z" fill="#2038d0"/><path d="M2.2 6.5 L8 7.8 V9.8 L2.2 8.5 Z" fill="#fff"/><path d="M8 7.8 L15 5.2 V7.2 L8 9.8 Z" fill="#d8e4f0"/><path d="M2.2 6.5 V8.5" stroke="#2038d0" stroke-width="1"/></svg>
<div class="a tx" style="left:410px;top:31.84px;font-size:12px;line-height:12px;color:#000;">Изменить тип строки...</div>
<div class="a tx" style="left:730px;top:31.84px;font-size:12px;line-height:12px;color:#a0a0b0;">Копировать в смету</div>
<div class="a" style="left:1px;top:52px;width:1214px;height:1px;background:#fff"></div>
<div class="a" style="left:1px;top:52px;width:1px;height:25px;background:#fff"></div>
<div class="a" style="left:1215px;top:52px;width:1px;height:26px;background:#a0a0a0"></div>
<div class="a" style="left:1px;top:77px;width:1215px;height:1px;background:#a0a0a0"></div>
<div class="a" style="left:5px;top:54px;width:1px;height:21px;background:#fff"></div>
<div class="a" style="left:7px;top:54px;width:1px;height:21px;background:#a0a0a0"></div>
<div class="a" style="left:8px;top:54px;width:1px;height:21px;background:#fff"></div>
<div class="a" style="left:10px;top:54px;width:1px;height:21px;background:#a0a0a0"></div>
<div class="a" style="left:6px;top:74px;width:1px;height:1px;background:#a0a0a0"></div>
<div class="a" style="left:9px;top:74px;width:1px;height:1px;background:#a0a0a0"></div>
<div class="a tx" style="left:16px;top:58.84px;font-size:12px;line-height:12px;color:#000;">Ресурсы</div>
<div class="a tx" style="left:72px;top:58.84px;font-size:12px;line-height:12px;color:#000;">Панель цен</div>
<div class="a tx" style="left:145px;top:58.84px;font-size:12px;line-height:12px;color:#000;">Лимит. затраты</div>
<div class="a tx" style="left:238px;top:58.84px;font-size:12px;line-height:12px;color:#000;">ЭСН</div>
<div class="a tx" style="left:272px;top:58.84px;font-size:12px;line-height:12px;color:#000;">Состав работ</div>
<div class="a tx" style="left:354px;top:58.84px;font-size:12px;line-height:12px;color:#000;">Тех. часть</div>
<div class="a tx" style="left:417px;top:58.84px;font-size:12px;line-height:12px;color:#000;">Индексы</div>
<div class="a tx" style="left:475px;top:58.84px;font-size:12px;line-height:12px;color:#000;">Конъюнктурный</div>
<div class="a tx" style="left:640px;top:58.84px;font-size:12px;line-height:12px;color:#000;">Формулы</div>
<div class="a tx" style="left:703px;top:58.84px;font-size:12px;line-height:12px;color:#000;">Структура</div>
<div class="a tx" style="left:770px;top:58.84px;font-size:12px;line-height:12px;color:#000;">Список открытых окон</div>
<div class="a" style="left:572px;top:54px;width:64px;height:23px;background:#f7f7f7;border-top:1px solid #a0a0a0;border-left:1px solid #a0a0a0;box-sizing:border-box"></div>
<div class="a tx" style="left:577px;top:59.84px;font-size:12px;line-height:12px;color:#000;">Поправки</div>
<svg class="a" style="left:902px;top:64px" width="5" height="3" viewBox="0 0 5 3"><path d="M0 0 H5 L2.5 3 Z" fill="#000"/></svg>
<div class="a" style="left:916px;top:56px;width:296px;height:17px;background:#fff"></div>
<div class="a" style="left:1202px;top:57px;width:9px;height:15px;background:#f0f0f0"></div>
<svg class="a" style="left:1203px;top:62px" width="7" height="4" viewBox="0 0 7 4"><path d="M0 0 H7 L3.5 4 Z" fill="#000"/></svg>
<div class="a tx" style="left:918px;top:57.84px;font-size:12px;line-height:12px;color:#000;">Уровень цен</div>
<div class="a" style="left:1px;top:78px;width:1755px;height:1px;background:#fff"></div>
<div class="a" style="left:1px;top:79px;width:1755px;height:1px;background:#a0a0a0"></div>
<div class="a" style="left:1px;top:80px;width:1755px;height:19px;background:#fff"></div>
<div class="a" style="left:1px;top:99px;width:1755px;height:1px;background:#a0a0a0"></div>
<div class="a" style="left:1px;top:100px;width:1755px;height:1px;background:#fff"></div>
<div class="a" style="left:1755px;top:79px;width:1px;height:21px;background:#a0a0a0"></div>
<div class="a" style="left:3px;top:81px;width:117px;height:17px;background:#fff;border:1px solid #696969;box-sizing:border-box"></div>
<div class="a tx" style="left:6px;top:83.84px;font-size:12px;line-height:12px;color:#000;">ЛС1.V2</div>
<div class="a" style="left:121px;top:81px;width:1px;height:18px;background:#a0a0a0"></div>
<div class="a" style="left:122px;top:81px;width:59px;height:18px;background:#f0f0f0"></div>
<div class="a" style="left:181px;top:81px;width:1px;height:18px;background:#a0a0a0"></div>
<div class="a tx" style="left:186px;top:83.97px;font-size:11.5px;line-height:11.5px;color:#000;font-family:'Liberation Mono',monospace;letter-spacing:1px">=(58*6/3)/100</div>
<div class="a" style="left:1716px;top:81px;width:38px;height:18px;background:#f0f0f0"></div>
<svg class="a" style="left:1719px;top:84px" width="9" height="15" viewBox="0 0 9 15"><path d="M1 5 L4.5 1.5 L8 5" stroke="#bbb" stroke-width="1.6" fill="none"/><path d="M1 9 L4.5 12.5 L8 9" stroke="#bbb" stroke-width="1.6" fill="none"/></svg>
<div class="a" style="left:1738px;top:83px;width:14px;height:14px;background:linear-gradient(#ff4a5a,#f00000);border:1px solid #7a3030;border-radius:2px;box-sizing:border-box"></div>
<svg class="a" style="left:1741px;top:86px" width="8" height="8" viewBox="0 0 8 8"><path d="M1 1 L7 7 M7 1 L1 7" stroke="#fff" stroke-width="2"/></svg>
<div class="a" style="left:1px;top:104px;width:1313px;height:1px;background:#fafafa"></div>
<div class="a" style="left:5px;top:109px;width:1289px;height:940px;background:#fff"></div>
<div class="a" style="left:4px;top:108px;width:1306px;height:1px;background:#8c8c8c"></div>
<div class="a" style="left:4px;top:108px;width:1px;height:957px;background:#b4b4b4"></div>
<div class="a" style="left:1310px;top:105px;width:1px;height:962px;background:#fff"></div>
<div class="a" style="left:1313px;top:104px;width:1px;height:964px;background:#8c8c8c"></div>
<div class="a" style="left:1314px;top:104px;width:1px;height:964px;background:#666666"></div>
<div class="a" style="left:5px;top:109px;width:1288px;height:35px;background:#f0f0f0"></div>
<div class="a" style="left:753px;top:127px;width:88px;height:17px;background:#c0dcc0"></div>
<div class="a" style="left:842px;top:127px;width:92px;height:17px;background:#c0dcc0"></div>
<div class="a" style="left:935px;top:127px;width:65px;height:17px;background:#c0dcc0"></div>
<div class="a" style="left:1001px;top:127px;width:65px;height:17px;background:#c0dcc0"></div>
<div class="a" style="left:1067px;top:127px;width:65px;height:17px;background:#c0dcc0"></div>
<div class="a" style="left:1133px;top:127px;width:65px;height:17px;background:#c0dcc0"></div>
<div class="a" style="left:1199px;top:127px;width:65px;height:17px;background:#c0dcc0"></div>
<div class="a" style="left:1265px;top:127px;width:28px;height:17px;background:#c0dcc0"></div>
<div class="a" style="left:5px;top:109px;width:1px;height:35px;background:#fff"></div>
<div class="a" style="left:17px;top:109px;width:1px;height:35px;background:#fff"></div>
<div class="a" style="left:49px;top:109px;width:1px;height:35px;background:#fff"></div>
<div class="a" style="left:118px;top:109px;width:1px;height:35px;background:#fff"></div>
<div class="a" style="left:156px;top:109px;width:1px;height:35px;background:#fff"></div>
<div class="a" style="left:210px;top:109px;width:1px;height:35px;background:#fff"></div>
<div class="a" style="left:286px;top:109px;width:1px;height:35px;background:#fff"></div>
<div class="a" style="left:517px;top:109px;width:1px;height:35px;background:#fff"></div>
<div class="a" style="left:584px;top:109px;width:1px;height:35px;background:#fff"></div>
<div class="a" style="left:665px;top:127px;width:1px;height:17px;background:#fff"></div>
<div class="a" style="left:753px;top:109px;width:1px;height:35px;background:#fff"></div>
<div class="a" style="left:842px;top:127px;width:1px;height:17px;background:#fff"></div>
<div class="a" style="left:935px;top:127px;width:1px;height:17px;background:#fff"></div>
<div class="a" style="left:1001px;top:127px;width:1px;height:17px;background:#fff"></div>
<div class="a" style="left:1067px;top:127px;width:1px;height:17px;background:#fff"></div>
<div class="a" style="left:1133px;top:127px;width:1px;height:17px;background:#fff"></div>
<div class="a" style="left:1199px;top:127px;width:1px;height:17px;background:#fff"></div>
<div class="a" style="left:1265px;top:127px;width:1px;height:17px;background:#fff"></div>
<div class="a" style="left:5px;top:109px;width:1288px;height:1px;background:#fff"></div>
<div class="a" style="left:584px;top:126px;width:709px;height:1px;background:#8c8c8c"></div>
<div class="a" style="left:584px;top:127px;width:709px;height:1px;background:#fff"></div>
<div class="a" style="left:584px;top:127px;width:1px;height:17px;background:#fff"></div>
<div class="a" style="left:665px;top:127px;width:1px;height:17px;background:#fff"></div>
<div class="a" style="left:16px;top:108px;width:1px;height:36px;background:#8c8c8c"></div>
<div class="a" style="left:48px;top:108px;width:1px;height:36px;background:#8c8c8c"></div>
<div class="a" style="left:117px;top:108px;width:1px;height:36px;background:#8c8c8c"></div>
<div class="a" style="left:155px;top:108px;width:1px;height:36px;background:#8c8c8c"></div>
<div class="a" style="left:209px;top:108px;width:1px;height:36px;background:#8c8c8c"></div>
<div class="a" style="left:285px;top:108px;width:1px;height:36px;background:#8c8c8c"></div>
<div class="a" style="left:516px;top:108px;width:1px;height:36px;background:#8c8c8c"></div>
<div class="a" style="left:583px;top:108px;width:1px;height:36px;background:#8c8c8c"></div>
<div class="a" style="left:664px;top:126px;width:1px;height:18px;background:#8c8c8c"></div>
<div class="a" style="left:752px;top:108px;width:1px;height:36px;background:#8c8c8c"></div>
<div class="a" style="left:841px;top:126px;width:1px;height:18px;background:#8c8c8c"></div>
<div class="a" style="left:934px;top:126px;width:1px;height:18px;background:#8c8c8c"></div>
<div class="a" style="left:1000px;top:126px;width:1px;height:18px;background:#8c8c8c"></div>
<div class="a" style="left:1066px;top:126px;width:1px;height:18px;background:#8c8c8c"></div>
<div class="a" style="left:1132px;top:126px;width:1px;height:18px;background:#8c8c8c"></div>
<div class="a" style="left:1198px;top:126px;width:1px;height:18px;background:#8c8c8c"></div>
<div class="a" style="left:1264px;top:126px;width:1px;height:18px;background:#8c8c8c"></div>
<div class="a" style="left:4px;top:144px;width:1289px;height:1px;background:#8c8c8c"></div>
<div class="a tx" style="left:20px;top:121.69px;font-size:11px;line-height:11px;color:#000;">Тип</div>
<div class="a tx" style="left:51px;top:121.69px;font-size:11px;line-height:11px;color:#000;">Утверждено</div>
<div class="a tx" style="left:120.5px;top:120.84px;font-size:12px;line-height:12px;color:#000;font-weight:bold;letter-spacing:-0.1px">№п/п</div>
<div class="a tx" style="left:158px;top:114.69px;font-size:11px;line-height:11px;color:#000;">Связь с</div>
<div class="a tx" style="left:158px;top:127.69px;font-size:11px;line-height:11px;color:#000;">ВОР</div>
<div class="a tx" style="left:212px;top:121.69px;font-size:11px;line-height:11px;color:#000;">Обоснование</div>
<div class="a tx" style="left:288px;top:121.69px;font-size:11px;line-height:11px;color:#000;">Наименование</div>
<div class="a tx" style="left:519px;top:114.69px;font-size:11px;line-height:11px;color:#000;">Ед.изм.</div>
<div class="a tx" style="left:519px;top:127.69px;font-size:11px;line-height:11px;color:#000;">(краткая)</div>
<div class="a tx" style="left:586px;top:112.69px;font-size:11px;line-height:11px;color:#000;">Количество</div>
<div class="a tx" style="left:586px;top:130.69px;font-size:11px;line-height:11px;color:#000;">Всего с коэф.</div>
<div class="a tx" style="left:667px;top:130.69px;font-size:11px;line-height:11px;color:#000;">Норма расхода</div>
<div class="a tx" style="left:755px;top:112.69px;font-size:11px;line-height:11px;color:#000;">Уровень цен</div>
<div class="a tx" style="left:755px;top:130.69px;font-size:11px;line-height:11px;color:#000;">Всего</div>
<div class="a tx" style="left:844px;top:130.69px;font-size:11px;line-height:11px;color:#000;">ПЗ</div>
<div class="a tx" style="left:937px;top:130.69px;font-size:11px;line-height:11px;color:#000;">ОЗП</div>
<div class="a tx" style="left:1003px;top:130.69px;font-size:11px;line-height:11px;color:#000;">ЭММ</div>
<div class="a tx" style="left:1069px;top:130.69px;font-size:11px;line-height:11px;color:#000;">ЗПМ</div>
<div class="a tx" style="left:1135px;top:130.69px;font-size:11px;line-height:11px;color:#000;">СтМат</div>
<div class="a tx" style="left:1201px;top:130.69px;font-size:11px;line-height:11px;color:#000;">Прочие</div>
<div class="a tx" style="left:1267px;top:130.69px;font-size:11px;line-height:11px;color:#000;">НР</div>
<div class="a" style="left:17px;top:145px;width:1276px;height:39px;background:#eaeafc"></div>
<div class="a" style="left:5px;top:145px;width:11px;height:39px;background:#f0f0f0"></div>
<div class="a" style="left:5px;top:145px;width:11px;height:1px;background:#fff"></div>
<div class="a" style="left:5px;top:145px;width:1px;height:39px;background:#fff"></div>
<div class="a" style="left:5px;top:185px;width:11px;height:39px;background:#f0f0f0"></div>
<div class="a" style="left:5px;top:185px;width:11px;height:1px;background:#fff"></div>
<div class="a" style="left:5px;top:185px;width:1px;height:39px;background:#fff"></div>
<div class="a" style="left:5px;top:225px;width:11px;height:39px;background:#f0f0f0"></div>
<div class="a" style="left:5px;top:225px;width:11px;height:1px;background:#fff"></div>
<div class="a" style="left:5px;top:225px;width:1px;height:39px;background:#fff"></div>
<div class="a" style="left:5px;top:265px;width:11px;height:39px;background:#f0f0f0"></div>
<div class="a" style="left:5px;top:265px;width:11px;height:1px;background:#fff"></div>
<div class="a" style="left:5px;top:265px;width:1px;height:39px;background:#fff"></div>
<div class="a" style="left:4px;top:184px;width:205px;height:1px;background:#8c8c8c"></div>
<div class="a" style="left:209px;top:184px;width:1084px;height:1px;background:#c4c4c4"></div>
<div class="a" style="left:4px;top:224px;width:205px;height:1px;background:#8c8c8c"></div>
<div class="a" style="left:209px;top:224px;width:1084px;height:1px;background:#c4c4c4"></div>
<div class="a" style="left:4px;top:264px;width:205px;height:1px;background:#8c8c8c"></div>
<div class="a" style="left:209px;top:264px;width:1084px;height:1px;background:#c4c4c4"></div>
<div class="a" style="left:4px;top:304px;width:205px;height:1px;background:#8c8c8c"></div>
<div class="a" style="left:209px;top:304px;width:1084px;height:1px;background:#c4c4c4"></div>
<div class="a" style="left:16px;top:144px;width:1px;height:160px;background:#8c8c8c"></div>
<div class="a" style="left:48px;top:144px;width:1px;height:160px;background:#8c8c8c"></div>
<div class="a" style="left:117px;top:144px;width:1px;height:160px;background:#8c8c8c"></div>
<div class="a" style="left:155px;top:144px;width:1px;height:160px;background:#8c8c8c"></div>
<div class="a" style="left:209px;top:144px;width:1px;height:160px;background:#8c8c8c"></div>
<div class="a" style="left:285px;top:144px;width:1px;height:160px;background:#c4c4c4"></div>
<div class="a" style="left:516px;top:144px;width:1px;height:160px;background:#c4c4c4"></div>
<div class="a" style="left:583px;top:144px;width:1px;height:160px;background:#c4c4c4"></div>
<div class="a" style="left:664px;top:144px;width:1px;height:160px;background:#c4c4c4"></div>
<div class="a" style="left:752px;top:144px;width:1px;height:160px;background:#c4c4c4"></div>
<div class="a" style="left:841px;top:144px;width:1px;height:160px;background:#c4c4c4"></div>
<div class="a" style="left:934px;top:144px;width:1px;height:160px;background:#c4c4c4"></div>
<div class="a" style="left:1000px;top:144px;width:1px;height:160px;background:#c4c4c4"></div>
<div class="a" style="left:1066px;top:144px;width:1px;height:160px;background:#c4c4c4"></div>
<div class="a" style="left:1132px;top:144px;width:1px;height:160px;background:#c4c4c4"></div>
<div class="a" style="left:1198px;top:144px;width:1px;height:160px;background:#c4c4c4"></div>
<div class="a" style="left:1264px;top:144px;width:1px;height:160px;background:#c4c4c4"></div>
<div class="a" style="left:78px;top:159px;width:11px;height:11px;background:#fff;border:1px solid #a0a0a0;box-sizing:border-box"></div>
<div class="a" style="left:78px;top:199px;width:11px;height:11px;background:#fff;border:1px solid #a0a0a0;box-sizing:border-box"></div>
<div class="a" style="left:78px;top:239px;width:11px;height:11px;background:#fff;border:1px solid #a0a0a0;box-sizing:border-box"></div>
<div class="a" style="left:78px;top:279px;width:11px;height:11px;background:#fff;border:1px solid #a0a0a0;box-sizing:border-box"></div>
<svg class="a" style="left:8px;top:239px" width="6" height="11" viewBox="0 0 6 11"><path d="M0 0 L6 5.5 L0 11 Z" fill="#000"/></svg>
<div class="a tx" style="left:121px;top:147.69px;font-size:11px;line-height:11px;color:#0000ff;">ЛС1</div>
<div class="a tx" style="left:210px;top:146.77px;font-size:11.5px;line-height:11.5px;color:#0000ff;font-weight:bold;">Новая</div>
<div class="a tx" style="left:210px;top:159.77px;font-size:11.5px;line-height:11.5px;color:#0000ff;font-weight:bold;">локаль</div>
<div class="a tx" style="left:210px;top:172.27px;font-size:11.5px;line-height:11.5px;color:#0000ff;font-weight:bold;">смета</div>
<svg class="a" style="left:250px;top:144px" width="36" height="34" viewBox="0 0 36 34"><path d="M3.5 19.5 L20.5 14.5 L31 4 L33 10 L24 28 L4 22 Z" fill="#fffff6"/><path d="M3 19 L17 4.5 L33 2 L20.5 14.5 Z" fill="#44dc80"/><path d="M14 9 L26 6" stroke="#b0f0c8" stroke-width="1"/><path d="M33 10 L24 28.5" stroke="#6090e0" stroke-width="1.5"/><path d="M3 22.5 L24 29" stroke="#207050" stroke-width="1.3"/><path d="M4 20.5 L23 26.5" stroke="#90a8f0" stroke-width="1.5"/><path d="M3.2 19 V22.5" stroke="#103020" stroke-width="1.4"/><text x="14" y="23.5" font-size="8.5" font-style="italic" font-family="Liberation Sans" fill="#000">ЛС</text></svg>
<div class="a tx" style="left:288px;top:147.9px;font-size:13.7px;line-height:13.7px;color:#0000ff;font-weight:bold;">Новая локальная смета</div>
<div class="a tx" style="left:121px;top:188.09px;font-size:11px;line-height:11px;color:#000;">1</div>
<div class="a tx" style="left:121px;top:228.09px;font-size:11px;line-height:11px;color:#000;">2</div>
<div class="a tx" style="left:121px;top:268.09px;font-size:11px;line-height:11px;color:#000;">3</div>
<div class="a tx" style="left:212px;top:188.09px;font-size:11px;line-height:11px;color:#000;">10-01-001-01</div>
<div class="a tx" style="left:212px;top:228.09px;font-size:11px;line-height:11px;color:#000;">10-01-007-02</div>
<div class="a tx" style="left:212px;top:268.09px;font-size:11px;line-height:11px;color:#000;">39-01-002-10</div>
<div class="a tx" style="left:288px;top:188.09px;font-size:11px;line-height:11px;color:#000;">Укрупнительная сборка и установка</div>
<div class="a tx" style="left:288px;top:201.39000000000001px;font-size:11px;line-height:11px;color:#000;">конструкций арок и ферм сегментных с</div>
<div class="a tx" style="left:288px;top:228.09px;font-size:11px;line-height:11px;color:#000;">Рубка стен: из брусьев толщиной 150 мм</div>
<div class="a tx" style="left:288px;top:268.09px;font-size:11px;line-height:11px;color:#000;">Установка закладных частей</div>
<div class="a tx" style="left:288px;top:281.39px;font-size:11px;line-height:11px;color:#000;">металлических конструкций в штрабах при</div>
<div class="a tx" style="left:519px;top:188.09px;font-size:11px;line-height:11px;color:#000;">ШТ</div>
<div class="a tx" style="left:519px;top:228.09px;font-size:11px;line-height:11px;color:#000;">100 м2</div>
<div class="a tx" style="left:519px;top:268.09px;font-size:11px;line-height:11px;color:#000;">т</div>
<div class="a tx" style="left:587px;top:188.09px;font-size:11px;line-height:11px;color:#000;">5</div>
<div class="a" style="left:584px;top:225px;width:80px;height:39px;background:#a0a0a0"></div>
<div class="a tx" style="left:587px;top:228.09px;font-size:11px;line-height:11px;color:#fff;">1,16</div>
<svg class="a" style="left:658px;top:225px" width="6" height="6" viewBox="0 0 6 6"><path d="M0 0 H6 V6 Z" fill="#00b000"/></svg>
<div class="a tx" style="left:587px;top:268.09px;font-size:11px;line-height:11px;color:#000;">0</div>
<svg class="a" style="left:658px;top:265px" width="6" height="6" viewBox="0 0 6 6"><path d="M0 0 H6 V6 Z" fill="#00b000"/></svg>
<svg class="a" style="left:274px;top:248px" width="9" height="14" viewBox="0 0 9 14"><path d="M1.5 4 H7.5 M4.5 1 V7" stroke="#40a020" stroke-width="2.2"/><path d="M1 12 H8" stroke="#e84020" stroke-width="2.5"/></svg>
<div class="a tx" style="right:921px;top:188.09px;font-size:11px;line-height:11px;color:#000;">47 273,75</div>
<div class="a tx" style="right:828px;top:188.09px;font-size:11px;line-height:11px;color:#000;">43 496</div>
<div class="a tx" style="right:762px;top:188.09px;font-size:11px;line-height:11px;color:#000;">0</div>
<div class="a tx" style="right:696px;top:188.09px;font-size:11px;line-height:11px;color:#000;">7 330,26</div>
<div class="a tx" style="right:630px;top:188.09px;font-size:11px;line-height:11px;color:#000;">2 317,64</div>
<div class="a tx" style="right:564px;top:188.09px;font-size:11px;line-height:11px;color:#000;">36 165,74</div>
<div class="a tx" style="right:498px;top:188.09px;font-size:11px;line-height:11px;color:#000;">0</div>
<div class="a tx" style="right:921px;top:228.09px;font-size:11px;line-height:11px;color:#000;">37 973,25</div>
<div class="a tx" style="right:828px;top:228.09px;font-size:11px;line-height:11px;color:#000;">34 441,28</div>
<div class="a tx" style="right:762px;top:228.09px;font-size:11px;line-height:11px;color:#000;">0</div>
<div class="a tx" style="right:696px;top:228.09px;font-size:11px;line-height:11px;color:#000;">5 462,54</div>
<div class="a tx" style="right:630px;top:228.09px;font-size:11px;line-height:11px;color:#000;">2 166,85</div>
<div class="a tx" style="right:564px;top:228.09px;font-size:11px;line-height:11px;color:#000;">28 978,74</div>
<div class="a tx" style="right:498px;top:228.09px;font-size:11px;line-height:11px;color:#000;">0</div>
<div class="a tx" style="right:921px;top:268.09px;font-size:11px;line-height:11px;color:#000;">0</div>
<div class="a tx" style="right:828px;top:268.09px;font-size:11px;line-height:11px;color:#000;">0</div>
<div class="a tx" style="right:762px;top:268.09px;font-size:11px;line-height:11px;color:#000;">0</div>
<div class="a tx" style="right:696px;top:268.09px;font-size:11px;line-height:11px;color:#000;">0</div>
<div class="a tx" style="right:630px;top:268.09px;font-size:11px;line-height:11px;color:#000;">0</div>
<div class="a tx" style="right:564px;top:268.09px;font-size:11px;line-height:11px;color:#000;">0</div>
<div class="a tx" style="right:498px;top:268.09px;font-size:11px;line-height:11px;color:#000;">0</div>
<div class="a" style="left:1265px;top:185px;width:28px;height:119px;overflow:hidden">
<div class="a tx" style="left:20px;top:3.090000000000005px;font-size:11px;line-height:11px;color:#000;">2 </div>
<div class="a tx" style="left:26px;top:43.09px;font-size:11px;line-height:11px;color:#000;">2</div>
</div>
<div class="a" style="left:1294px;top:109px;width:16px;height:940px;background:#f0f0f0"></div>
<div class="a" style="left:1294px;top:385px;width:15px;height:517px;background:#cecece"></div>
<svg class="a" style="left:1298px;top:115px" width="8" height="6" viewBox="0 0 8 6"><path d="M0.5 5 L4 1.5 L7.5 5" stroke="#606060" stroke-width="1.8" fill="none"/></svg>
<svg class="a" style="left:1298px;top:1037px" width="8" height="6" viewBox="0 0 8 6"><path d="M0.5 1 L4 4.5 L7.5 1" stroke="#606060" stroke-width="1.8" fill="none"/></svg>
<div class="a" style="left:5px;top:1049px;width:1305px;height:16px;background:#f0f0f0"></div>
<div class="a" style="left:22px;top:1049px;width:17px;height:15px;background:#c8c8c8"></div>
<svg class="a" style="left:10px;top:1053px" width="6" height="8" viewBox="0 0 6 8"><path d="M5 0.5 L1.5 4 L5 7.5" stroke="#606060" stroke-width="1.8" fill="none"/></svg>
<svg class="a" style="left:1282px;top:1053px" width="6" height="8" viewBox="0 0 6 8"><path d="M1 0.5 L4.5 4 L1 7.5" stroke="#606060" stroke-width="1.8" fill="none"/></svg>
<div class="a" style="left:76px;top:1067px;width:1239px;height:1px;background:#707070"></div>
<div class="a" style="left:1315px;top:1067px;width:1px;height:21px;background:#a0a0a0"></div>
<div class="a" style="left:2px;top:1066px;width:73px;height:21px;background:#f0f0f0"></div>
<div class="a" style="left:3px;top:1087px;width:73px;height:1px;background:#707070"></div>
<div class="a" style="left:75px;top:1067px;width:1px;height:20px;background:#707070"></div>
<div class="a tx" style="left:9px;top:1073.19px;font-size:11px;line-height:11px;color:#000;">Полный вид</div>
<div class="a" style="left:76px;top:1067px;width:106px;height:19px;background:#f0f0f0;border-top:1px solid #707070;border-left:1px solid #707070;border-right:1px solid #707070;border-bottom:2px solid #7a7a7a;border-radius:0 0 2px 2px;box-sizing:border-box"></div>
<div class="a" style="left:77px;top:1068px;width:1px;height:16px;background:#fff"></div>
<div class="a" style="left:77px;top:1068px;width:104px;height:1px;background:#fff"></div>
<div class="a tx" style="left:81px;top:1071.69px;font-size:11px;line-height:11px;color:#000;">Сокращенный вид</div>
<div class="a" style="left:184px;top:1067px;width:67px;height:19px;background:#f0f0f0;border-top:1px solid #707070;border-left:1px solid #707070;border-right:1px solid #707070;border-bottom:2px solid #7a7a7a;border-radius:0 0 2px 2px;box-sizing:border-box"></div>
<div class="a" style="left:185px;top:1068px;width:1px;height:16px;background:#fff"></div>
<div class="a" style="left:185px;top:1068px;width:65px;height:1px;background:#fff"></div>
<div class="a tx" style="left:189px;top:1071.69px;font-size:11px;line-height:11px;color:#000;">Вид строки</div>
<div class="a" style="left:253px;top:1067px;width:100px;height:19px;background:#f0f0f0;border-top:1px solid #707070;border-left:1px solid #707070;border-right:1px solid #707070;border-bottom:2px solid #7a7a7a;border-radius:0 0 2px 2px;box-sizing:border-box"></div>
<div class="a" style="left:254px;top:1068px;width:1px;height:16px;background:#fff"></div>
<div class="a" style="left:254px;top:1068px;width:98px;height:1px;background:#fff"></div>
<div class="a tx" style="left:258px;top:1071.69px;font-size:11px;line-height:11px;color:#000;">Объектная смета</div>
<div class="a" style="left:355px;top:1067px;width:85px;height:19px;background:#f0f0f0;border-top:1px solid #707070;border-left:1px solid #707070;border-right:1px solid #707070;border-bottom:2px solid #7a7a7a;border-radius:0 0 2px 2px;box-sizing:border-box"></div>
<div class="a" style="left:356px;top:1068px;width:1px;height:16px;background:#fff"></div>
<div class="a" style="left:356px;top:1068px;width:83px;height:1px;background:#fff"></div>
<div class="a tx" style="left:360px;top:1071.69px;font-size:11px;line-height:11px;color:#000;">Предпросмотр</div>
<div class="a" style="left:1px;top:1089px;width:1755px;height:1px;background:#fff"></div>
<div class="a" style="left:3px;top:1091px;width:86px;height:26px;border-top:1px solid #a0a0a0;border-left:1px solid #a0a0a0;border-right:1px solid #fff;border-bottom:1px solid #fff;box-sizing:border-box"></div>
<div class="a" style="left:92px;top:1091px;width:296px;height:26px;border-top:1px solid #a0a0a0;border-left:1px solid #a0a0a0;border-right:1px solid #fff;border-bottom:1px solid #fff;box-sizing:border-box"></div>
<div class="a" style="left:392px;top:1091px;width:1295px;height:26px;border-top:1px solid #a0a0a0;border-left:1px solid #a0a0a0;border-right:1px solid #fff;border-bottom:1px solid #fff;box-sizing:border-box"></div>
<div class="a" style="left:1690px;top:1091px;width:30px;height:26px;border-top:1px solid #a0a0a0;border-left:1px solid #a0a0a0;border-right:1px solid #fff;border-bottom:1px solid #fff;box-sizing:border-box"></div>
<div class="a" style="left:1723px;top:1091px;width:32px;height:26px;border-top:1px solid #a0a0a0;border-left:1px solid #a0a0a0;border-right:1px solid #fff;border-bottom:1px solid #fff;box-sizing:border-box"></div>
<div class="a tx" style="left:397px;top:1098.1px;font-size:11.7px;line-height:11.7px;color:#000;">ИТОГО (руб)</div>
<div class="a tx" style="left:473px;top:1098.1px;font-size:11.7px;line-height:11.7px;color:#000;">По ЛС: 85 247</div>
<div class="a tx" style="left:562px;top:1098.27px;font-size:11.5px;line-height:11.5px;color:#000;">По объекту: 85 247</div>
<svg class="a" style="left:1696px;top:1095px" width="18" height="18" viewBox="0 0 18 18"><circle cx="9" cy="9" r="8" fill="#9a9a9a"/><rect x="8" y="7" width="2.2" height="6" fill="#fff"/><circle cx="9.1" cy="4.8" r="1.2" fill="#fff"/><path d="M2 2 L16 16" stroke="#f00000" stroke-width="1.8"/></svg>
<div class="a tx" style="left:1731px;top:1097.84px;font-size:12px;line-height:12px;color:#000;">RU</div>
<div class="a" style="left:1315px;top:104px;width:1px;height:984px;background:#b0b0b0"></div>
<div class="a" style="left:1316px;top:104px;width:1px;height:984px;background:#fafafa"></div>
<div class="a" style="left:1317px;top:104px;width:1px;height:984px;background:#fff"></div>
<div class="a" style="left:1321px;top:110px;width:422px;height:1px;background:#a0a0a0"></div>
<div class="a" style="left:1321px;top:111px;width:422px;height:1px;background:#fff"></div>
<div class="a" style="left:1321px;top:113px;width:422px;height:1px;background:#a0a0a0"></div>
<div class="a" style="left:1321px;top:114px;width:422px;height:1px;background:#fff"></div>
<div class="a" style="left:1743px;top:109px;width:1px;height:6px;background:#a0a0a0"></div>
<div class="a" style="left:1745px;top:106px;width:11px;height:11px;border-top:1px solid #fff;border-left:1px solid #fff;border-right:1px solid #696969;border-bottom:1px solid #696969;box-sizing:border-box"></div>
<svg class="a" style="left:1747px;top:108px" width="7" height="7" viewBox="0 0 7 7"><path d="M0.5 0.5 L6.5 6.5 M6.5 0.5 L0.5 6.5" stroke="#000" stroke-width="1.2"/></svg>
<div class="a" style="left:1323px;top:120px;width:81px;height:19px;background:#f0f0f0;border-top:1px solid #fff;border-left:1px solid #fff;border-right:2px solid #696969;border-bottom:2px solid #696969;box-sizing:border-box"></div>
<div class="a tx" style="left:1163.5px;width:400px;text-align:center;top:124.19px;font-size:11px;line-height:11px;color:#000;">Очистить</div>
<div class="a" style="left:1407px;top:120px;width:90px;height:19px;background:#f0f0f0;border-top:1px solid #fff;border-left:1px solid #fff;border-right:2px solid #696969;border-bottom:2px solid #696969;box-sizing:border-box"></div>
<div class="a tx" style="left:1252.0px;width:400px;text-align:center;top:124.19px;font-size:11px;line-height:11px;color:#000;">Справочник</div>
<div class="a" style="left:1501px;top:123px;width:12px;height:12px;background:#fff;border-top:2px solid #8a8a8a;border-left:2px solid #8a8a8a;border-right:1px solid #f4f4f4;border-bottom:1px solid #f4f4f4;box-sizing:border-box"></div>
<svg class="a" style="left:1503px;top:125px" width="9" height="9" viewBox="0 0 9 9"><path d="M1 4.5 L3.5 7 L8 1.5" stroke="#000" stroke-width="2" fill="none"/></svg>
<div class="a tx" style="left:1520px;top:124.19px;font-size:11px;line-height:11px;color:#000;">Добавление</div>
<div class="a" style="left:1324px;top:147px;width:317px;height:15px;background:#fff"></div>
<div class="a" style="left:1627px;top:148px;width:13px;height:13px;background:#f0f0f0"></div>
<svg class="a" style="left:1631px;top:152px" width="7" height="4" viewBox="0 0 7 4"><path d="M0 0 H7 L3.5 4 Z" fill="#000"/></svg>
<div class="a" style="left:1647px;top:145px;width:80px;height:19px;background:#f0f0f0;border-top:1px solid #fff;border-left:1px solid #fff;border-right:2px solid #696969;border-bottom:2px solid #696969;box-sizing:border-box"></div>
<div class="a tx" style="left:1487.0px;width:400px;text-align:center;top:148.27px;font-size:11.5px;line-height:11.5px;color:#a0a0a0;">Добавить</div>
<div class="a" style="left:1731px;top:148px;width:12px;height:12px;background:#f2f2f2;border-top:2px solid #8a8a8a;border-left:2px solid #8a8a8a;border-right:1px solid #f4f4f4;border-bottom:1px solid #f4f4f4;box-sizing:border-box"></div>
<svg class="a" style="left:1733px;top:150px" width="9" height="9" viewBox="0 0 9 9"><path d="M1 4.5 L3.5 7 L8 1.5" stroke="#909090" stroke-width="2" fill="none"/></svg>
<div class="a" style="left:1323px;top:169px;width:428px;height:212px;background:#f0f0f0;border-top:1px solid #a0a0a0;border-left:1px solid #a0a0a0;border-right:1px solid #fff;border-bottom:1px solid #fff;box-sizing:border-box"></div>
<div class="a" style="left:1324px;top:170px;width:426px;height:1px;background:#6a6a6a"></div>
<div class="a" style="left:1324px;top:170px;width:1px;height:210px;background:#6a6a6a"></div>
<div class="a" style="left:1325px;top:171px;width:88px;height:19px;background:#f0f0f0"></div>
<div class="a" style="left:1718px;top:171px;width:15px;height:19px;background:#f0f0f0"></div>
<div class="a" style="left:1415px;top:173px;width:302px;height:15px;background:#fff"></div>
<div class="a" style="left:1702px;top:174px;width:13px;height:13px;background:#f0f0f0"></div>
<svg class="a" style="left:1705px;top:179px" width="7" height="4" viewBox="0 0 7 4"><path d="M0 0 H7 L3.5 4 Z" fill="#000"/></svg>
<div class="a" style="left:1719px;top:173px;width:12px;height:13px;background:#fff;border-top:2px solid #8a8a8a;border-left:2px solid #8a8a8a;border-right:1px solid #f4f4f4;border-bottom:1px solid #f4f4f4;box-sizing:border-box"></div>
<div class="a tx" style="left:1333px;top:175.29px;font-size:11px;line-height:11px;color:#000;">Объем</div>
<div class="a" style="left:1325px;top:190px;width:88px;height:19px;background:#f0f0f0"></div>
<div class="a" style="left:1718px;top:190px;width:15px;height:19px;background:#f0f0f0"></div>
<div class="a" style="left:1415px;top:192px;width:302px;height:15px;background:#fff"></div>
<div class="a" style="left:1702px;top:193px;width:13px;height:13px;background:#f0f0f0"></div>
<svg class="a" style="left:1705px;top:198px" width="7" height="4" viewBox="0 0 7 4"><path d="M0 0 H7 L3.5 4 Z" fill="#000"/></svg>
<div class="a" style="left:1719px;top:192px;width:12px;height:13px;background:#fff;border-top:2px solid #8a8a8a;border-left:2px solid #8a8a8a;border-right:1px solid #f4f4f4;border-bottom:1px solid #f4f4f4;box-sizing:border-box"></div>
<svg class="a" style="left:1721px;top:194px" width="9" height="9" viewBox="0 0 9 9"><path d="M1 4.5 L3.5 7 L8 1.5" stroke="#000" stroke-width="2" fill="none"/></svg>
<div class="a tx" style="left:1333px;top:194.29px;font-size:11px;line-height:11px;color:#000;">Сметная цена</div>
<div class="a" style="left:1325px;top:209px;width:88px;height:19px;background:#dcfce6"></div>
<div class="a" style="left:1718px;top:209px;width:15px;height:19px;background:#dcfce6"></div>
<div class="a" style="left:1415px;top:211px;width:302px;height:15px;background:#fff"></div>
<div class="a" style="left:1702px;top:212px;width:13px;height:13px;background:#f0f0f0"></div>
<svg class="a" style="left:1705px;top:217px" width="7" height="4" viewBox="0 0 7 4"><path d="M0 0 H7 L3.5 4 Z" fill="#000"/></svg>
<div class="a" style="left:1719px;top:211px;width:12px;height:13px;background:#fff;border-top:2px solid #8a8a8a;border-left:2px solid #8a8a8a;border-right:1px solid #f4f4f4;border-bottom:1px solid #f4f4f4;box-sizing:border-box"></div>
<svg class="a" style="left:1721px;top:213px" width="9" height="9" viewBox="0 0 9 9"><path d="M1 4.5 L3.5 7 L8 1.5" stroke="#000" stroke-width="2" fill="none"/></svg>
<div class="a tx" style="left:1333px;top:213.29px;font-size:11px;line-height:11px;color:#800000;">ОЗП</div>
<div class="a" style="left:1325px;top:228px;width:88px;height:19px;background:#dcfce6"></div>
<div class="a" style="left:1718px;top:228px;width:15px;height:19px;background:#dcfce6"></div>
<div class="a" style="left:1415px;top:230px;width:302px;height:15px;background:#fff"></div>
<div class="a" style="left:1702px;top:231px;width:13px;height:13px;background:#f0f0f0"></div>
<svg class="a" style="left:1705px;top:236px" width="7" height="4" viewBox="0 0 7 4"><path d="M0 0 H7 L3.5 4 Z" fill="#000"/></svg>
<div class="a" style="left:1719px;top:230px;width:12px;height:13px;background:#fff;border-top:2px solid #8a8a8a;border-left:2px solid #8a8a8a;border-right:1px solid #f4f4f4;border-bottom:1px solid #f4f4f4;box-sizing:border-box"></div>
<svg class="a" style="left:1721px;top:232px" width="9" height="9" viewBox="0 0 9 9"><path d="M1 4.5 L3.5 7 L8 1.5" stroke="#000" stroke-width="2" fill="none"/></svg>
<div class="a tx" style="left:1333px;top:232.29px;font-size:11px;line-height:11px;color:#000;">ТрудСтр</div>
<div class="a" style="left:1325px;top:247px;width:88px;height:19px;background:#d6e8fc"></div>
<div class="a" style="left:1718px;top:247px;width:15px;height:19px;background:#d6e8fc"></div>
<div class="a" style="left:1415px;top:249px;width:302px;height:15px;background:#fff"></div>
<div class="a" style="left:1702px;top:250px;width:13px;height:13px;background:#f0f0f0"></div>
<svg class="a" style="left:1705px;top:255px" width="7" height="4" viewBox="0 0 7 4"><path d="M0 0 H7 L3.5 4 Z" fill="#000"/></svg>
<div class="a" style="left:1719px;top:249px;width:12px;height:13px;background:#fff;border-top:2px solid #8a8a8a;border-left:2px solid #8a8a8a;border-right:1px solid #f4f4f4;border-bottom:1px solid #f4f4f4;box-sizing:border-box"></div>
<svg class="a" style="left:1721px;top:251px" width="9" height="9" viewBox="0 0 9 9"><path d="M1 4.5 L3.5 7 L8 1.5" stroke="#000" stroke-width="2" fill="none"/></svg>
<div class="a tx" style="left:1333px;top:251.29000000000002px;font-size:11px;line-height:11px;color:#000;">ЭММ</div>
<div class="a" style="left:1325px;top:266px;width:88px;height:19px;background:#d6e8fc"></div>
<div class="a" style="left:1718px;top:266px;width:15px;height:19px;background:#d6e8fc"></div>
<div class="a" style="left:1415px;top:268px;width:302px;height:15px;background:#fff"></div>
<div class="a" style="left:1702px;top:269px;width:13px;height:13px;background:#f0f0f0"></div>
<svg class="a" style="left:1705px;top:274px" width="7" height="4" viewBox="0 0 7 4"><path d="M0 0 H7 L3.5 4 Z" fill="#000"/></svg>
<div class="a" style="left:1719px;top:268px;width:12px;height:13px;background:#fff;border-top:2px solid #8a8a8a;border-left:2px solid #8a8a8a;border-right:1px solid #f4f4f4;border-bottom:1px solid #f4f4f4;box-sizing:border-box"></div>
<svg class="a" style="left:1721px;top:270px" width="9" height="9" viewBox="0 0 9 9"><path d="M1 4.5 L3.5 7 L8 1.5" stroke="#000" stroke-width="2" fill="none"/></svg>
<div class="a tx" style="left:1333px;top:270.29px;font-size:11px;line-height:11px;color:#000;">НормЭММ</div>
<div class="a" style="left:1325px;top:285px;width:88px;height:19px;background:#d6e8fc"></div>
<div class="a" style="left:1718px;top:285px;width:15px;height:19px;background:#d6e8fc"></div>
<div class="a" style="left:1415px;top:287px;width:302px;height:15px;background:#fff"></div>
<div class="a" style="left:1702px;top:288px;width:13px;height:13px;background:#f0f0f0"></div>
<svg class="a" style="left:1705px;top:293px" width="7" height="4" viewBox="0 0 7 4"><path d="M0 0 H7 L3.5 4 Z" fill="#000"/></svg>
<div class="a" style="left:1719px;top:287px;width:12px;height:13px;background:#fff;border-top:2px solid #8a8a8a;border-left:2px solid #8a8a8a;border-right:1px solid #f4f4f4;border-bottom:1px solid #f4f4f4;box-sizing:border-box"></div>
<svg class="a" style="left:1721px;top:289px" width="9" height="9" viewBox="0 0 9 9"><path d="M1 4.5 L3.5 7 L8 1.5" stroke="#000" stroke-width="2" fill="none"/></svg>
<div class="a tx" style="left:1333px;top:289.29px;font-size:11px;line-height:11px;color:#000;">ЗПМ</div>
<div class="a" style="left:1325px;top:304px;width:88px;height:19px;background:#d6e8fc"></div>
<div class="a" style="left:1718px;top:304px;width:15px;height:19px;background:#d6e8fc"></div>
<div class="a" style="left:1415px;top:306px;width:302px;height:15px;background:#fff"></div>
<div class="a" style="left:1702px;top:307px;width:13px;height:13px;background:#f0f0f0"></div>
<svg class="a" style="left:1705px;top:312px" width="7" height="4" viewBox="0 0 7 4"><path d="M0 0 H7 L3.5 4 Z" fill="#000"/></svg>
<div class="a" style="left:1719px;top:306px;width:12px;height:13px;background:#fff;border-top:2px solid #8a8a8a;border-left:2px solid #8a8a8a;border-right:1px solid #f4f4f4;border-bottom:1px solid #f4f4f4;box-sizing:border-box"></div>
<svg class="a" style="left:1721px;top:308px" width="9" height="9" viewBox="0 0 9 9"><path d="M1 4.5 L3.5 7 L8 1.5" stroke="#000" stroke-width="2" fill="none"/></svg>
<div class="a tx" style="left:1333px;top:308.29px;font-size:11px;line-height:11px;color:#000;">ТрудМаш</div>
<div class="a" style="left:1325px;top:323px;width:88px;height:19px;background:#fde8e8"></div>
<div class="a" style="left:1718px;top:323px;width:15px;height:19px;background:#fde8e8"></div>
<div class="a" style="left:1415px;top:325px;width:302px;height:15px;background:#fff"></div>
<div class="a" style="left:1702px;top:326px;width:13px;height:13px;background:#f0f0f0"></div>
<svg class="a" style="left:1705px;top:331px" width="7" height="4" viewBox="0 0 7 4"><path d="M0 0 H7 L3.5 4 Z" fill="#000"/></svg>
<div class="a" style="left:1719px;top:325px;width:12px;height:13px;background:#fff;border-top:2px solid #8a8a8a;border-left:2px solid #8a8a8a;border-right:1px solid #f4f4f4;border-bottom:1px solid #f4f4f4;box-sizing:border-box"></div>
<svg class="a" style="left:1721px;top:327px" width="9" height="9" viewBox="0 0 9 9"><path d="M1 4.5 L3.5 7 L8 1.5" stroke="#000" stroke-width="2" fill="none"/></svg>
<div class="a tx" style="left:1333px;top:327.29px;font-size:11px;line-height:11px;color:#000;">СтМат</div>
<div class="a" style="left:1325px;top:342px;width:88px;height:19px;background:#fde8e8"></div>
<div class="a" style="left:1718px;top:342px;width:15px;height:19px;background:#fde8e8"></div>
<div class="a" style="left:1415px;top:344px;width:302px;height:15px;background:#fff"></div>
<div class="a" style="left:1702px;top:345px;width:13px;height:13px;background:#f0f0f0"></div>
<svg class="a" style="left:1705px;top:350px" width="7" height="4" viewBox="0 0 7 4"><path d="M0 0 H7 L3.5 4 Z" fill="#000"/></svg>
<div class="a" style="left:1719px;top:344px;width:12px;height:13px;background:#fff;border-top:2px solid #8a8a8a;border-left:2px solid #8a8a8a;border-right:1px solid #f4f4f4;border-bottom:1px solid #f4f4f4;box-sizing:border-box"></div>
<svg class="a" style="left:1721px;top:346px" width="9" height="9" viewBox="0 0 9 9"><path d="M1 4.5 L3.5 7 L8 1.5" stroke="#000" stroke-width="2" fill="none"/></svg>
<div class="a tx" style="left:1333px;top:346.29px;font-size:11px;line-height:11px;color:#000;">НормРасхМат</div>
<div class="a" style="left:1325px;top:361px;width:88px;height:18px;background:#f0f0f0"></div>
<div class="a" style="left:1718px;top:361px;width:15px;height:18px;background:#f0f0f0"></div>
<div class="a" style="left:1415px;top:363px;width:302px;height:15px;background:#fff"></div>
<div class="a" style="left:1702px;top:364px;width:13px;height:13px;background:#f0f0f0"></div>
<svg class="a" style="left:1705px;top:369px" width="7" height="4" viewBox="0 0 7 4"><path d="M0 0 H7 L3.5 4 Z" fill="#000"/></svg>
<div class="a" style="left:1719px;top:363px;width:12px;height:13px;background:#fff;border-top:2px solid #8a8a8a;border-left:2px solid #8a8a8a;border-right:1px solid #f4f4f4;border-bottom:1px solid #f4f4f4;box-sizing:border-box"></div>
<svg class="a" style="left:1721px;top:365px" width="9" height="9" viewBox="0 0 9 9"><path d="M1 4.5 L3.5 7 L8 1.5" stroke="#000" stroke-width="2" fill="none"/></svg>
<div class="a tx" style="left:1333px;top:365.29px;font-size:11px;line-height:11px;color:#000;">Прочие</div>
<div class="a" style="left:1413px;top:209px;width:304px;height:18px;background:#fff;border-top:1px solid #a0a0a0;border-left:1px solid #a0a0a0;box-sizing:border-box"></div>
<div class="a" style="left:1701px;top:210px;width:15px;height:16px;background:#f0f0f0;border-top:1px solid #fff;border-left:1px solid #fff;border-right:1px solid #696969;border-bottom:1px solid #696969;box-sizing:border-box"></div>
<svg class="a" style="left:1705px;top:217px" width="7" height="4" viewBox="0 0 7 4"><path d="M0 0 H7 L3.5 4 Z" fill="#000"/></svg>
<div class="a" style="left:1413px;top:247px;width:304px;height:18px;background:#fff;border-top:1px solid #a0a0a0;border-left:1px solid #a0a0a0;box-sizing:border-box"></div>
<div class="a" style="left:1701px;top:248px;width:15px;height:16px;background:#f0f0f0;border-top:1px solid #fff;border-left:1px solid #fff;border-right:1px solid #696969;border-bottom:1px solid #696969;box-sizing:border-box"></div>
<svg class="a" style="left:1705px;top:255px" width="7" height="4" viewBox="0 0 7 4"><path d="M0 0 H7 L3.5 4 Z" fill="#000"/></svg>
<div class="a tx" style="left:1416px;top:212.49px;font-size:11px;line-height:11px;color:#000;">*1,1</div>
<div class="a" style="left:1435px;top:212px;width:1px;height:12px;background:#000"></div>
<div class="a tx" style="left:1416px;top:288.49px;font-size:11px;line-height:11px;color:#000;">*1,1</div>
<div class="a" style="left:1733px;top:171px;width:17px;height:209px;background:repeating-conic-gradient(#f0f0f0 0 25%, #fafafa 0 50%) 0 0/2px 2px"></div>
<div class="a" style="left:1733px;top:171px;width:17px;height:17px;background:#f0f0f0;border-top:1px solid #fff;border-left:1px solid #fff;border-right:2px solid #696969;border-bottom:2px solid #696969;box-sizing:border-box"></div>
<div class="a tx" style="left:1541.5px;width:400px;text-align:center;top:174.19px;font-size:11px;line-height:11px;color:#000;"></div>
<svg class="a" style="left:1738px;top:177px" width="7" height="4" viewBox="0 0 7 4"><path d="M0 4 L3.5 0 L7 4 Z" fill="#000"/></svg>
<div class="a" style="left:1733px;top:188px;width:17px;height:148px;background:#f0f0f0;border-top:1px solid #fff;border-left:1px solid #fff;border-right:2px solid #696969;border-bottom:2px solid #696969;box-sizing:border-box"></div>
<div class="a tx" style="left:1541.5px;width:400px;text-align:center;top:256.69px;font-size:11px;line-height:11px;color:#000;"></div>
<div class="a" style="left:1733px;top:363px;width:17px;height:17px;background:#f0f0f0;border-top:1px solid #fff;border-left:1px solid #fff;border-right:2px solid #696969;border-bottom:2px solid #696969;box-sizing:border-box"></div>
<div class="a tx" style="left:1541.5px;width:400px;text-align:center;top:366.19px;font-size:11px;line-height:11px;color:#000;"></div>
<svg class="a" style="left:1737px;top:369px" width="9" height="5" viewBox="0 0 9 5"><path d="M0 0 H9 L4.5 5 Z" fill="#000"/></svg>
<div class="a" style="left:1323px;top:392px;width:428px;height:594px;background:#fff;border-top:1px solid #a0a0a0;border-left:1px solid #a0a0a0;border-right:1px solid #fff;border-bottom:1px solid #fff;box-sizing:border-box"></div>
<div class="a" style="left:1324px;top:393px;width:426px;height:1px;background:#6a6a6a"></div>
<div class="a" style="left:1324px;top:393px;width:1px;height:592px;background:#6a6a6a"></div>
<div class="a" style="left:1734px;top:394px;width:16px;height:590px;background:#f0f0f0"></div>
<svg class="a" style="left:1738px;top:400px" width="8" height="6" viewBox="0 0 8 6"><path d="M0.5 5 L4 1.5 L7.5 5" stroke="#bbb" stroke-width="1.8" fill="none"/></svg>
<svg class="a" style="left:1738px;top:973px" width="8" height="6" viewBox="0 0 8 6"><path d="M0.5 1 L4 4.5 L7.5 1" stroke="#bbb" stroke-width="1.8" fill="none"/></svg>
<div class="a" style="left:1323px;top:991px;width:12px;height:12px;background:#fff;border-top:2px solid #8a8a8a;border-left:2px solid #8a8a8a;border-right:1px solid #f4f4f4;border-bottom:1px solid #f4f4f4;box-sizing:border-box"></div>
<div class="a tx" style="left:1341px;top:991.69px;font-size:11px;line-height:11px;color:#000;">Показывать в наименовании</div>
<div class="a" style="left:1319px;top:1013px;width:437px;height:22px;background:repeating-conic-gradient(#ececec 0 25%, #f8f8f8 0 50%) 0 0/2px 2px"></div>
<div class="a" style="left:1319px;top:1012px;width:437px;height:2px;background:#8a8a8a"></div>
<svg class="a" style="left:1319px;top:1012px" width="150" height="18" viewBox="0 0 150 18"><path d="M0 1 H9 L14 16 H80 L84 1" fill="#f0f0f0" stroke="#707070" stroke-width="1"/><path d="M83 1 L86 16 H139 L143 1" fill="#fff" stroke="#707070" stroke-width="1"/><path d="M9 0.5 H143" stroke="#f0f0f0" stroke-width="0"/></svg>
<div class="a tx" style="left:1334px;top:1015.19px;font-size:11px;line-height:11px;color:#000;">Примечание</div>
<div class="a tx" style="left:1405px;top:1015.19px;font-size:11px;line-height:11px;color:#000;">Поправка</div>
<div class="a" style="left:1327px;top:1040px;width:12px;height:12px;background:#fff;border-top:2px solid #8a8a8a;border-left:2px solid #8a8a8a;border-right:1px solid #f4f4f4;border-bottom:1px solid #f4f4f4;box-sizing:border-box"></div>
<svg class="a" style="left:1329px;top:1042px" width="9" height="9" viewBox="0 0 9 9"><path d="M1 4.5 L3.5 7 L8 1.5" stroke="#000" stroke-width="2" fill="none"/></svg>
<div class="a tx" style="left:1346px;top:1040.19px;font-size:11px;line-height:11px;color:#000;">Заменять назначенные</div>
<div class="a" style="left:1327px;top:1058px;width:208px;height:25px;background:#f0f0f0;border-top:1px solid #fff;border-left:1px solid #fff;border-right:2px solid #696969;border-bottom:2px solid #696969;box-sizing:border-box"></div>
<div class="a tx" style="left:1231.0px;width:400px;text-align:center;top:1064.69px;font-size:11px;line-height:11px;color:#000;">Применить</div>
<div class="a" style="left:1541px;top:1058px;width:207px;height:25px;background:#f0f0f0;border-top:1px solid #fff;border-left:1px solid #fff;border-right:2px solid #696969;border-bottom:2px solid #696969;box-sizing:border-box"></div>
<div class="a tx" style="left:1444.5px;width:400px;text-align:center;top:1064.69px;font-size:11px;line-height:11px;color:#000;">Отменить</div>
<div class="a" style="left:1320px;top:1051px;width:218px;height:36px;border:3px solid #ff0000;box-sizing:border-box"></div>
<div class="a" style="left:1326px;top:204px;width:127px;height:28px;border:3px solid #ff0000;box-sizing:border-box"></div>
<div class="a" style="left:1323px;top:281px;width:128px;height:27px;border:3px solid #ff0000;box-sizing:border-box"></div>
<svg class="a" style="left:1370px;top:900px" width="70" height="160" viewBox="0 0 70 160"><path d="M13.5 9 L47 128" stroke="#ff0000" stroke-width="3.2" stroke-linecap="round"/><path d="M37 127 L52 124 L51 149 Z" fill="#ff0000"/></svg>
</body></html>
